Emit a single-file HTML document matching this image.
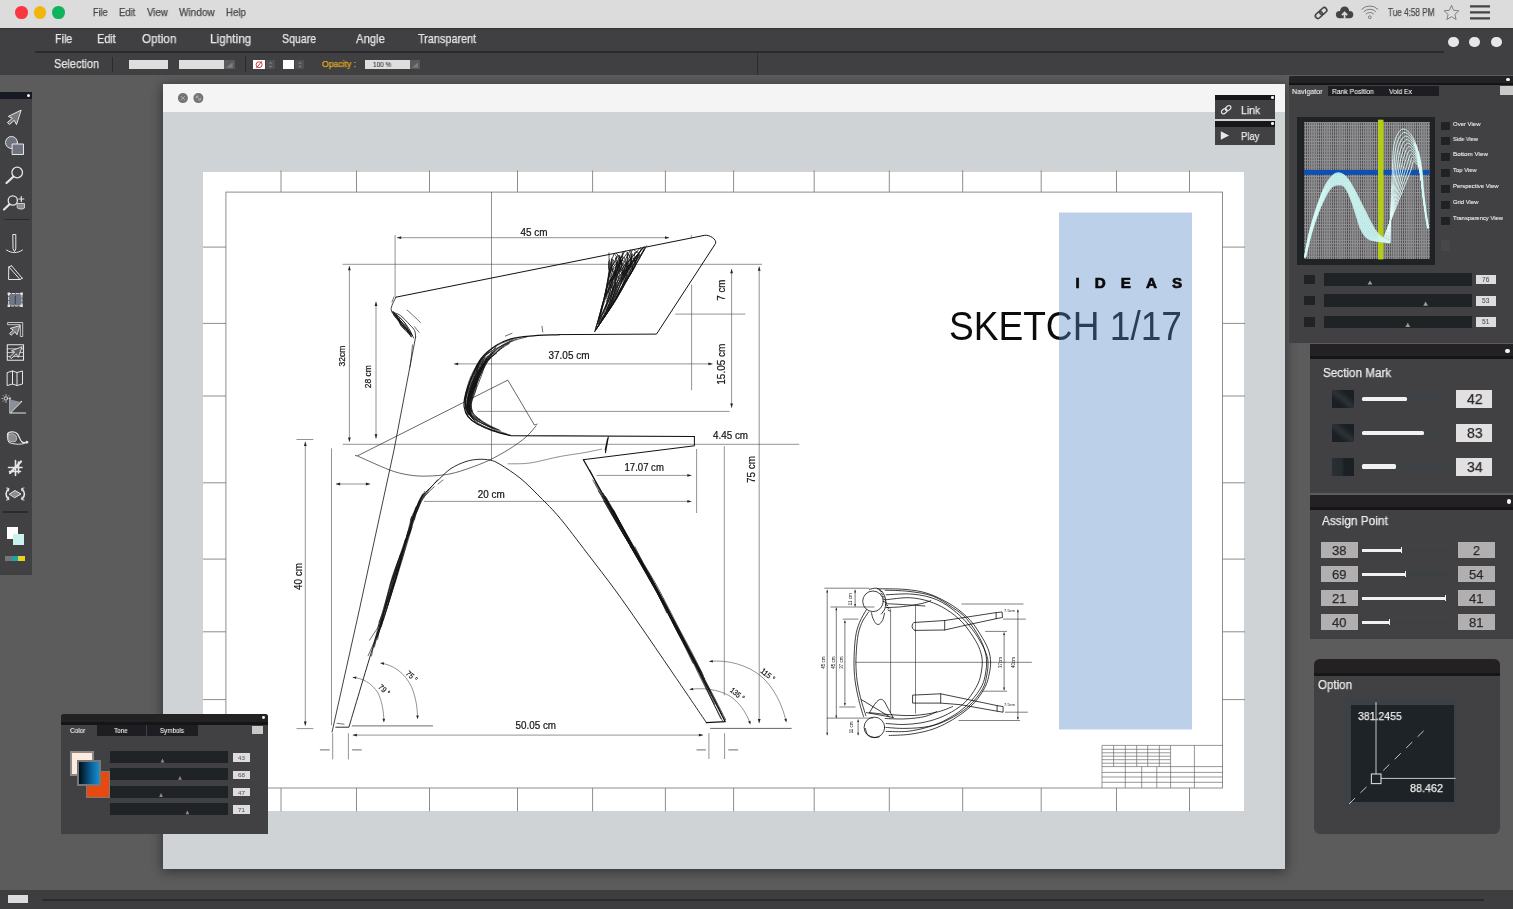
<!DOCTYPE html>
<html lang="en"><head><meta charset="utf-8"><title>Sketch 1/17</title>
<style>
html,body{margin:0;padding:0;}
body{width:1513px;height:909px;overflow:hidden;background:#5c5c5c;font-family:"Liberation Sans",sans-serif;}
#root{position:relative;width:1513px;height:909px;overflow:hidden;background:#5c5c5c;}
#root div{position:absolute;box-sizing:border-box;}
#root svg{position:absolute;left:0;top:0;overflow:visible;}
.t{position:absolute;white-space:nowrap;line-height:1;transform-origin:0 50%;display:block;will-change:transform;-webkit-text-stroke:0.25px currentColor;}
svg text{font-family:"Liberation Sans",sans-serif;}
</style></head>
<body><div id="root">
<div style="left:163.4px;top:84.0px;width:1122.0px;height:785.4px;background:#d0d3d6;box-shadow:0 2px 11px 1px rgba(0,0,0,.42);"></div>
<div style="left:163.4px;top:84.0px;width:1122.0px;height:28.0px;background:#f4f4f4;"></div>
<svg width="1513" height="120" viewBox="0 0 1513 120"><circle cx="182.900" cy="98.100" r="5" fill="#747474"/><circle cx="198.400" cy="98.100" r="5" fill="#747474"/><path d="M180.900 96.100l4 4M184.900 96.100l-4 4" stroke="#b4b4b4" stroke-width="0.9"/><path d="M196.400 96.100l4 4M196.400 98.400v-2.300h2.300M200.400 97.800v2.300h-2.300" stroke="#b4b4b4" stroke-width="0.9" fill="none"/></svg>
<div style="left:203.2px;top:172.4px;width:1040.4px;height:639.0px;background:#ffffff;"></div>
<div style="left:0.0px;top:0.0px;width:1513.0px;height:28.0px;background:#dcdcdc;"></div>
<div style="left:15.1px;top:6.0px;width:12.6px;height:12.6px;background:#fb3640;border-radius:50%;"></div>
<div style="left:33.6px;top:6.0px;width:12.6px;height:12.6px;background:#f2b50d;border-radius:50%;"></div>
<div style="left:52.0px;top:6.0px;width:12.6px;height:12.6px;background:#0fb35c;border-radius:50%;"></div>
<span class="t" style="left:93.4px;top:7.3px;font-size:10.6px;color:#474747;transform:scaleX(0.8548);">File</span>
<span class="t" style="left:119.4px;top:7.3px;font-size:10.6px;color:#474747;transform:scaleX(0.8978);">Edit</span>
<span class="t" style="left:146.7px;top:7.3px;font-size:10.6px;color:#474747;transform:scaleX(0.9173);">View</span>
<span class="t" style="left:178.5px;top:7.3px;font-size:10.6px;color:#474747;transform:scaleX(0.9469);">Window</span>
<span class="t" style="left:225.5px;top:7.3px;font-size:10.6px;color:#474747;transform:scaleX(0.9082);">Help</span>
<span class="t" style="left:1387.5px;top:7.5px;font-size:10.4px;color:#474747;transform:scaleX(0.7861);">Tue 4:58 PM</span>
<svg width="1513" height="28" viewBox="0 0 1513 28">
<g fill="none" stroke="#444" stroke-width="1.6" stroke-linecap="round">
 <g transform="translate(1321.100 13) rotate(-42)">
  <rect x="-6.800" y="-2.500" width="7.800" height="5" rx="2.500"/>
  <rect x="-1" y="-2.500" width="7.800" height="5" rx="2.500"/>
 </g>
</g>
<g fill="#444">
 <circle cx="1339.500" cy="14.600" r="3.600"/><circle cx="1344.600" cy="11" r="4.500"/><circle cx="1349.700" cy="14.600" r="3.600"/>
 <rect x="1339.500" y="13" width="10.200" height="5.200"/>
</g>
<path d="M1344.600 18.200v-5.400m-2.600 2.300l2.600-2.700 2.600 2.700" stroke="#dcdcdc" stroke-width="1.700" fill="none"/>
<g fill="none" stroke="#7a7a7a" stroke-width="1">
 <path d="M1361.600 9.400a11.600 11.600 0 0 1 16.400 0"/>
 <path d="M1363.700 11.800a8.600 8.600 0 0 1 12.200 0"/>
 <path d="M1365.800 14.200a5.600 5.600 0 0 1 8 0"/>
 <circle cx="1369.800" cy="17.200" r="1.400"/>
</g>
<path d="M1451.500 5.400l2.100 4.900 5.300.5-4 3.500 1.200 5.200-4.600-2.800-4.600 2.800 1.200-5.200-4-3.500 5.300-.5z" fill="none" stroke="#777" stroke-width="0.9"/>
<g stroke="#444" stroke-width="2.300">
 <path d="M1470 6.400h20M1470 12.400h20M1470 18.400h20"/>
</g>
</svg>
<div style="left:0.0px;top:28.0px;width:1513.0px;height:47.4px;background:#404042;"></div>
<div style="left:0.0px;top:28.0px;width:1513.0px;height:1.2px;background:#333335;"></div>
<div style="left:34.7px;top:50.6px;width:1409.5px;height:2.0px;background:#2a2a2c;border-radius:1px;"></div>
<span class="t" style="left:55.1px;top:33.3px;font-size:12.2px;color:#e6e6e6;transform:scaleX(0.8800);">File</span>
<span class="t" style="left:97.2px;top:33.3px;font-size:12.2px;color:#e6e6e6;transform:scaleX(0.8943);">Edit</span>
<span class="t" style="left:142.2px;top:33.3px;font-size:12.2px;color:#e6e6e6;transform:scaleX(0.9542);">Option</span>
<span class="t" style="left:209.6px;top:33.3px;font-size:12.2px;color:#e6e6e6;transform:scaleX(0.9640);">Lighting</span>
<span class="t" style="left:281.9px;top:33.3px;font-size:12.2px;color:#e6e6e6;transform:scaleX(0.8668);">Square</span>
<span class="t" style="left:356.2px;top:33.3px;font-size:12.2px;color:#e6e6e6;transform:scaleX(0.9229);">Angle</span>
<span class="t" style="left:417.7px;top:33.3px;font-size:12.2px;color:#e6e6e6;transform:scaleX(0.8924);">Transparent</span>
<div style="left:1448.0px;top:36.6px;width:10.8px;height:10.8px;background:#e9e6e8;border-radius:50%;"></div>
<div style="left:1469.4px;top:36.6px;width:10.8px;height:10.8px;background:#e9e6e8;border-radius:50%;"></div>
<div style="left:1490.8px;top:36.6px;width:10.8px;height:10.8px;background:#e9e6e8;border-radius:50%;"></div>
<span class="t" style="left:54.0px;top:58.1px;font-size:12.2px;color:#e6e6e6;transform:scaleX(0.9006);">Selection</span>
<div style="left:112.1px;top:56.5px;width:1.2px;height:15.0px;background:#2b2b2d;"></div>
<div style="left:128.5px;top:60.0px;width:39.5px;height:9.4px;background:#dedede;"></div>
<div style="left:178.5px;top:60.0px;width:45.5px;height:9.4px;background:#dedede;"></div>
<div style="left:224.0px;top:60.0px;width:11.0px;height:9.4px;background:#5a5a5c;"></div>
<svg width="1513" height="80" viewBox="0 0 1513 80"><path d="M226.500 67.500l6-5v5z" fill="#7d7d7f"/><path d="M412 67.500l6-5v5z" fill="#7d7d7f"/><circle cx="259.100" cy="64.700" r="3" fill="none" stroke="#c4303a" stroke-width="0.9"/><path d="M256.300 68.200l5.600-7" stroke="#c4303a" stroke-width="0.9"/><g fill="#77777a"><path d="M268.700 63.400h4l-2-2.300zM268.700 66h4l-2 2.300z"/><path d="M298 63.400h4l-2-2.300zM298 66h4l-2 2.300z"/></g></svg>
<div style="left:245.1px;top:55.8px;width:1.2px;height:16.0px;background:#2b2b2d;"></div>
<div style="left:253.3px;top:59.9px;width:11.6px;height:9.4px;background:#ffffff;"></div>
<div style="left:266.0px;top:59.9px;width:9.4px;height:9.4px;background:#505053;"></div>
<div style="left:282.8px;top:59.9px;width:11.2px;height:9.4px;background:#ffffff;"></div>
<div style="left:295.4px;top:59.9px;width:9.1px;height:9.4px;background:#505053;"></div>
<svg width="1513" height="80" viewBox="0 0 1513 80"><circle cx="259.100" cy="64.700" r="3" fill="none" stroke="#c4303a" stroke-width="0.9"/><path d="M256.300 68.200l5.600-7" stroke="#c4303a" stroke-width="0.9"/><g fill="#77777a"><path d="M268.700 63.700h4l-2-2.300zM268.700 65.700h4l-2 2.300z"/><path d="M298 63.700h4l-2-2.300zM298 65.700h4l-2 2.300z"/></g></svg>
<span class="t" style="left:321.6px;top:59.9px;font-size:8.9px;color:#e2a625;transform:scaleX(0.9739);">Opacity :</span>
<div style="left:364.5px;top:60.0px;width:45.1px;height:9.4px;background:#dedede;"></div>
<span class="t" style="left:373.2px;top:61.6px;font-size:6.6px;color:#3a3a3a;-webkit-text-stroke:0.1px currentColor;transform:scaleX(0.9725);">100 %</span>
<div style="left:409.6px;top:60.0px;width:10.9px;height:9.4px;background:#5a5a5c;"></div>
<svg width="1513" height="80" viewBox="0 0 1513 80"><path d="M226.500 67.500l6-5v5z" fill="#7d7d7f"/><path d="M412 67.500l6-5v5z" fill="#7d7d7f"/></svg>
<div style="left:756.5px;top:52.5px;width:1.5px;height:22.5px;background:#2b2b2d;"></div>
<div style="left:0.0px;top:890.0px;width:1513.0px;height:19.0px;background:#3e3e40;"></div>
<div style="left:7.6px;top:895.4px;width:20.4px;height:8.0px;background:#dcdcdc;"></div>
<div style="left:42.0px;top:898.8px;width:1441.7px;height:2.0px;background:#2a2a2c;border-radius:1px;"></div>
<svg width="1513" height="909" viewBox="0 0 1513 909">
<g fill="none" stroke="#808080" stroke-width="0.9">
<rect x="225.900" y="192.100" width="996.600" height="595.900"/>
<path d="M281 170.500V192M281 788V811.400M356.5 170.500V192M356.5 788V811.400M429.5 170.500V192M429.5 788V811.400M517.5 170.500V192M517.5 788V811.400M592.6 170.500V192M592.6 788V811.400M665.4 170.500V192M665.4 788V811.400M733.6 170.500V192M733.6 788V811.400M814.2 170.500V192M814.2 788V811.400M889.3 170.500V192M889.3 788V811.400M962.7 170.500V192M962.7 788V811.400M1041.2 170.500V192M1041.2 788V811.400M1116.5 170.500V192M1116.5 788V811.400M1189.5 170.500V192M1189.5 788V811.400M203 247.1H226M1222.500 247.1H1245M203 323.4H226M1222.500 323.4H1245M203 396H226M1222.500 396H1245M203 482.8H226M1222.500 482.8H1245M203 559.1H226M1222.500 559.1H1245M203 631.8H226M1222.500 631.8H1245M203 699.6H226M1222.500 699.6H1245"/>
</g>
<g fill="none" stroke="#6a6a6a" stroke-width="0.7">
<path d="M1102 745.400H1222.500M1102 745.400V788M1102 766.600H1222.500M1170.600 745.400V788M1194.400 745.400V788M1113.6 745.400V766.600M1125.3 745.400V766.600M1136.7 745.400V766.600M1147.7 745.400V766.600M1159.3 745.400V766.600M1102 749.3H1170.600M1102 752.8H1170.600M1102 756.2H1170.600M1102 759.7H1170.600M1102 763.2H1170.600M1102 772.4H1222.500M1102 777H1222.500M1102 782.3H1222.500M1125.3 766.600V788M1141.7 766.600V788M1156.8 766.600V788"/></g>
<text x="948.9" y="339.8" font-size="40.3" fill="#0c0c0c" textLength="233.1" lengthAdjust="spacingAndGlyphs">SKETCH 1/17</text>
<rect x="1059" y="212.500" width="133" height="517" fill="rgb(90,137,202)" fill-opacity="0.4"/>
<text x="1075.600" y="288.300" font-size="15.2" font-weight="700" fill="#0a0a0a" stroke="#0a0a0a" stroke-width="0.7" letter-spacing="15">IDEAS</text>
<g fill="none" stroke="#4a4a4a" stroke-width="0.6">
<path d="M491.500 192V460.200M395.100 235V296.600M342.600 264.300H762M342.600 444.300H799.200M477.300 411.400H729.500M691.600 284.600V390.200M675.200 314.100H745.300M696.600 449V513M724.300 446.200V695.400M331.500 448.400V725.400M296.500 439.500H313.400M296.500 728.600H313.400M332.700 733.200V759.400M348.400 733.200V759.400M708.900 733.200V759M724.600 733.200V759M423.900 501.400H691.500M691.300 235.200V238.500"/>
<path d="M397.0 237.7H669.2"/><path d="M397.0 237.7L401.2 236.3L401.2 239.1z" fill="#222" stroke="none"/><path d="M669.2 237.7L665.0 239.1L665.0 236.3z" fill="#222" stroke="none"/>
<path d="M454.0 363.9H712.6"/><path d="M454.0 363.9L458.2 362.5L458.2 365.3z" fill="#222" stroke="none"/><path d="M712.6 363.9L708.4 365.3L708.4 362.5z" fill="#222" stroke="none"/>
<path d="M596.5 475.4H691.5"/><path d="M691.5 475.4L687.3 476.8L687.3 474.0z" fill="#222" stroke="none"/>
<path d="M691.5 501.4L687.3 502.8L687.3 500.0z" fill="#222" stroke="none"/>
<path d="M352.7 735.1H703.1"/><path d="M352.7 735.1L356.9 733.7L356.9 736.5z" fill="#222" stroke="none"/><path d="M703.1 735.1L698.9 736.5L698.9 733.7z" fill="#222" stroke="none"/>
<path d="M335.9 484.0H370.1"/><path d="M335.9 484.0L340.1 482.6L340.1 485.4z" fill="#222" stroke="none"/><path d="M370.1 484.0L365.9 485.4L365.9 482.6z" fill="#222" stroke="none"/>
<path d="M349.4 266.0V441.8"/><path d="M349.4 266.0L350.8 270.2L348.0 270.2z" fill="#222" stroke="none"/><path d="M349.4 441.8L348.0 437.6L350.8 437.6z" fill="#222" stroke="none"/>
<path d="M376.0 301.8V438.5"/><path d="M376.0 301.8L377.4 306.0L374.6 306.0z" fill="#222" stroke="none"/><path d="M376.0 438.5L374.6 434.3L377.4 434.3z" fill="#222" stroke="none"/>
<path d="M305.3 441.8V725.7"/><path d="M305.3 441.8L306.7 446.0L303.9 446.0z" fill="#222" stroke="none"/><path d="M305.3 725.7L303.9 721.5L306.7 721.5z" fill="#222" stroke="none"/>
<path d="M731.6 269.0V407.7"/><path d="M731.6 269.0L733.0 273.2L730.2 273.2z" fill="#222" stroke="none"/><path d="M731.6 407.7L730.2 403.5L733.0 403.5z" fill="#222" stroke="none"/>
<path d="M759.2 266.5V723.1"/><path d="M759.2 266.5L760.6 270.7L757.8 270.7z" fill="#222" stroke="none"/><path d="M759.2 723.1L757.8 718.9L760.6 718.9z" fill="#222" stroke="none"/>
<path d="M380.400 663.100C392 664.500 405 672 412 688C416 698 417.300 708 417.600 718"/><path d="M380.4 663.1L384.1 662.3L383.8 664.9z" fill="#222" stroke="none"/><path d="M417.6 719.2L416.2 715.6L418.8 715.6z" fill="#222" stroke="none"/>
<path d="M352.700 677.300C362 678 372 683 378 693C382 701 383.600 711 383.900 721"/><path d="M352.7 677.3L356.4 676.4L356.1 679.0z" fill="#222" stroke="none"/><path d="M383.9 722.4L382.5 718.8L385.1 718.8z" fill="#222" stroke="none"/>
<path d="M709.200 661.400C728 659.500 748 665 762 677C774 688 782 704 786 721"/><path d="M709.2 661.4L712.7 659.9L712.9 662.4z" fill="#222" stroke="none"/><path d="M786.4 722.4L784.3 719.2L786.8 718.6z" fill="#222" stroke="none"/>
<path d="M689.600 689.400C703 687.500 718 689.500 729 695.500C739 702 746 712 750 723"/><path d="M689.6 689.4L693.0 687.7L693.3 690.3z" fill="#222" stroke="none"/><path d="M750.5 724.6L748.0 721.7L750.5 720.8z" fill="#222" stroke="none"/>
</g>
<g fill="none" stroke="#8a8a8a" stroke-width="1.1">
<path d="M351.800 725.900H433.100M319.900 749.900H329.700M352.100 749.900H361.700M696.500 749.900H705.900M728.300 749.900H738.200"/>
<path d="M710.200 728.400H791.600" stroke="#555" stroke-width="0.9"/>
</g>
<g fill="none" stroke="#161616" stroke-width="0.65">
<path d="M355 455.500L357.400 455.900L507.800 380.100L534.400 425L537.500 424"/>
<path d="M357.4 455.9C360.5 457.3 369.9 461.6 376.1 464.3C382.4 467.0 388.6 469.9 394.9 471.8C401.1 473.7 407.4 474.9 413.6 475.6C419.8 476.3 426.1 476.2 432.3 475.9C438.5 475.6 444.8 475.0 451.0 473.7C457.2 472.4 463.5 470.2 469.7 468.0C475.9 465.8 481.8 463.7 488.4 460.6C494.9 457.5 502.7 453.2 509.0 449.3C515.3 445.4 521.5 440.9 526.0 437.0C530.5 433.1 534.6 427.5 536.3 425.6"/>
<path d="M507.7 463.8C511.4 463.7 521.3 464.2 530.0 463.0C538.7 461.8 550.8 458.2 560.0 456.5C569.2 454.8 578.0 453.8 585.0 452.5C592.0 451.2 599.2 449.6 602.1 449.0" stroke="#555"/>
</g>
<g fill="none" stroke="#111" stroke-width="1" stroke-linejoin="round" stroke-linecap="round">
<path d="M395.900 297.200L704.700 235.300C709 234.600 717 239 715.600 243.400L656.500 334.100L559.600 334.600"/>
<path d="M559.6 334.6C554.6 334.9 537.8 335.4 529.7 336.1C521.6 336.8 516.6 337.3 511.0 338.9C505.4 340.5 501.0 342.2 496.0 345.5C491.0 348.8 485.1 353.3 481.0 358.6C476.9 363.9 474.3 371.1 471.7 377.3C469.1 383.5 466.4 391.0 465.1 396.0C463.9 401.0 463.7 403.8 464.2 407.2C464.7 410.6 465.8 413.8 468.0 416.6C470.2 419.4 473.2 421.8 477.3 424.1C481.4 426.4 486.7 428.7 492.3 430.6C497.9 432.5 507.9 434.9 511.0 435.7L694.400 436.500" stroke-width="1.200"/>
<path d="M694.400 436.500V445.800L583.400 459.700"/>
<path d="M583.4 459.7C589.5 470.5 607.7 502.8 620.0 524.5C632.3 546.2 645.6 568.7 657.3 590.1C669.0 611.5 678.7 631.1 690.0 653.0C701.3 674.9 719.3 710.2 725.2 721.6L706.400 722.600" stroke-width="1.300"/>
<path d="M335.800 727.200L348.9 727.2C352.2 716.0 363.1 679.5 369.0 660.0C374.9 640.5 380.3 624.2 384.6 610.0C388.9 595.8 391.6 585.6 394.9 574.7C398.2 563.8 401.1 554.8 404.2 544.8C407.3 534.8 410.8 522.7 413.6 514.9C416.4 507.1 418.3 502.5 421.0 498.0C423.7 493.5 426.9 491.2 430.0 488.0C433.1 484.8 436.3 481.8 439.8 478.5C443.3 475.2 446.6 471.3 451.0 468.5C455.4 465.7 461.3 463.0 466.0 461.5C470.7 460.0 474.9 459.5 479.0 459.3C483.1 459.1 486.8 459.4 490.3 460.2C493.8 461.0 495.1 461.3 500.0 464.3C504.9 467.3 513.3 472.6 520.0 478.0C526.7 483.4 533.3 490.3 540.0 497.0C546.7 503.7 552.2 508.9 560.0 518.2C567.8 527.5 577.8 541.0 587.0 553.0C596.2 565.0 606.4 578.1 615.2 590.1C624.0 602.1 630.5 611.6 640.0 625.3C649.5 638.9 660.9 655.8 672.0 672.0C683.1 688.2 700.7 714.2 706.4 722.6" stroke-width="0.9"/>
<path d="M337 723.300L344 724.200" stroke-width="0.6"/>
<path d="M395.9 297.2C395.1 299.3 390.4 306.8 391.2 309.9C392.0 313.0 397.5 313.1 400.6 315.6C403.7 318.1 407.6 322.4 409.9 324.9C412.2 327.4 413.7 328.5 414.6 330.5C415.6 332.5 415.4 335.9 415.6 337.0" stroke-width="0.8"/>
<path d="M415.600 337L394 450L359.300 610L332.100 731.900" stroke-width="0.8"/>
</g>
<g fill="none" stroke="#111" stroke-width="0.7" stroke-linecap="round">
<path d="M394.3 315.7C395.0 316.3 397.1 318.2 398.5 319.6C400.0 320.9 401.4 322.4 402.7 323.9C404.1 325.4 405.3 327.0 406.5 328.6C407.6 330.2 409.2 332.7 409.7 333.6M393.1 311.4C393.8 312.4 396.0 315.6 397.3 317.9C398.5 320.1 399.4 322.7 400.7 324.8C402.1 327.0 403.7 328.8 405.5 330.6C407.2 332.5 410.1 335.0 411.0 335.9M393.1 312.4C394.1 313.3 397.5 315.7 399.5 317.6C401.6 319.4 403.6 321.4 405.3 323.6C407.0 325.7 408.6 328.0 410.0 330.4C411.3 332.8 413.0 336.6 413.6 337.9M395.7 315.2C396.1 316.0 397.4 318.5 398.4 320.1C399.4 321.7 400.5 323.2 401.6 324.7C402.8 326.1 404.0 327.5 405.3 328.8C406.6 330.2 408.7 332.1 409.4 332.8M394.5 313.2C395.5 314.0 398.4 316.2 400.2 317.9C401.9 319.6 403.8 321.3 405.1 323.3C406.5 325.3 407.1 327.9 408.1 330.1C409.2 332.3 410.8 335.5 411.3 336.6M391.6 311.6C392.6 312.5 395.5 315.3 397.3 317.3C399.1 319.2 400.8 321.4 402.3 323.5C403.9 325.7 405.2 328.1 406.7 330.3C408.2 332.6 410.5 335.8 411.2 336.9M392.1 312.4C392.8 313.4 394.9 316.5 396.4 318.5C397.9 320.4 399.6 322.4 401.3 324.2C403.0 326.0 404.8 327.7 406.6 329.5C408.4 331.2 411.3 334.0 412.2 334.9M396.5 314.8C397.0 315.7 398.4 318.6 399.3 320.4C400.3 322.2 401.0 324.0 402.3 325.6C403.5 327.1 405.3 328.4 406.8 329.8C408.3 331.1 410.8 333.2 411.6 333.8M399.2 318.1C399.3 319.0 399.4 321.6 399.8 323.0C400.2 324.4 400.7 325.4 401.6 326.3C402.5 327.3 404.0 328.0 405.2 328.8C406.5 329.5 408.5 330.6 409.2 330.9M393.1 313.2C394.0 314.1 396.7 316.5 398.4 318.3C400.1 320.0 401.8 321.8 403.5 323.7C405.2 325.5 406.9 327.4 408.3 329.4C409.8 331.4 411.5 334.7 412.1 335.8M393.7 315.1C394.4 315.8 396.7 317.9 398.3 319.3C399.8 320.8 401.5 322.2 402.9 323.9C404.3 325.5 405.4 327.5 406.6 329.3C407.8 331.0 409.6 333.7 410.2 334.6" stroke-width="0.8"/>
<path d="M407.100 310C411 313.500 416 318 420.500 322.600M414.600 326.800C416 329 418 331 419.300 332.400M394 296.800L392 302M412.500 345C412 352 411 360 410 367" stroke-width="0.6"/>
<path d="M512.8 339.3C510.5 340.2 503.2 342.2 498.9 344.5C494.6 346.8 490.5 349.9 487.0 353.2C483.4 356.6 480.2 360.5 477.6 364.6C475.0 368.8 473.1 373.6 471.3 378.2C469.5 382.8 467.9 387.7 466.9 392.5C465.9 397.2 464.3 402.6 465.3 406.8C466.3 411.1 469.7 414.8 473.0 417.8C476.3 420.8 481.0 422.7 485.3 424.7C489.7 426.7 496.7 429.0 499.0 429.9M484.8 363.3C484.4 364.3 483.5 367.5 482.6 369.8C481.8 372.0 480.7 374.3 479.8 376.5C478.9 378.7 478.0 380.7 477.2 382.9C476.4 385.0 475.6 387.4 474.8 389.6C474.0 391.7 473.0 393.7 472.2 395.8C471.4 397.8 470.6 400.0 470.1 401.9C469.6 403.9 469.2 405.6 469.2 407.6C469.3 409.6 469.5 411.9 470.3 413.9C471.1 415.9 473.3 418.4 473.9 419.3M501.9 347.9C500.2 349.2 495.0 353.2 492.0 356.1C489.0 359.0 486.2 361.7 483.8 365.3C481.4 368.9 479.4 373.6 477.5 377.8C475.6 382.1 473.9 386.6 472.5 390.9C471.1 395.1 469.3 399.3 469.1 403.2C468.9 407.1 469.2 411.1 471.2 414.3C473.2 417.5 477.3 420.1 481.0 422.6C484.8 425.0 489.2 427.2 493.6 429.1C497.9 431.0 504.9 433.2 507.1 434.1M477.3 365.5C477.3 366.6 477.3 370.0 477.3 372.1C477.2 374.3 477.2 376.5 477.1 378.4C477.0 380.4 476.7 382.2 476.5 384.1C476.3 386.0 476.3 388.3 475.9 390.1C475.5 392.0 474.7 393.7 474.1 395.3C473.5 396.9 473.0 398.2 472.4 399.7C471.9 401.1 471.1 402.6 470.7 404.1C470.2 405.7 470.0 407.4 469.8 409.1C469.6 410.8 469.6 413.7 469.5 414.6M484.9 361.3C484.5 361.9 483.4 363.7 482.6 365.0C481.7 366.4 480.6 367.8 479.7 369.2C478.7 370.6 477.7 372.1 476.8 373.6C475.9 375.0 475.0 376.4 474.2 377.9C473.4 379.4 472.7 380.9 471.9 382.5C471.2 384.0 470.6 385.6 469.9 387.2C469.1 388.8 468.3 390.3 467.6 391.9C466.9 393.5 466.0 394.9 465.6 396.6C465.2 398.2 465.2 400.8 465.1 401.7M489.4 351.7C488.7 352.3 486.5 354.3 485.2 355.6C483.9 357.0 482.5 358.2 481.5 359.7C480.4 361.2 479.8 363.0 479.0 364.8C478.3 366.5 477.9 368.5 477.2 370.3C476.5 372.0 475.5 373.7 474.8 375.4C474.2 377.2 474.0 379.2 473.5 381.0C473.0 382.8 472.4 384.6 472.0 386.5C471.5 388.3 471.2 390.4 470.8 392.1C470.5 393.9 470.1 396.3 470.0 397.1M487.9 356.1C486.8 357.0 483.1 359.3 481.2 361.5C479.3 363.6 477.9 366.4 476.3 369.0C474.8 371.7 473.3 374.3 472.1 377.1C470.8 379.9 470.0 382.8 468.9 385.6C467.9 388.5 466.4 391.3 465.9 394.2C465.3 397.2 465.2 400.4 465.5 403.2C465.9 406.0 466.8 408.9 468.1 411.2C469.4 413.5 471.1 415.2 473.2 416.8C475.2 418.4 479.3 420.2 480.6 420.8M490.2 355.3C488.9 356.6 484.9 359.9 482.7 362.8C480.5 365.6 478.8 369.2 477.0 372.6C475.2 375.9 473.6 379.3 472.0 382.8C470.4 386.3 468.8 389.9 467.6 393.5C466.5 397.2 465.2 400.9 465.3 404.5C465.3 408.1 466.0 412.3 467.9 415.4C469.7 418.5 473.1 421.0 476.3 423.1C479.4 425.3 483.2 426.7 486.8 428.2C490.3 429.6 495.9 431.4 497.7 432.1M511.4 341.0C509.3 342.1 502.6 345.0 498.8 347.8C495.0 350.6 491.4 354.4 488.6 357.8C485.8 361.3 484.1 364.8 482.0 368.8C479.9 372.8 477.9 377.4 476.1 381.9C474.3 386.4 472.3 391.2 471.4 395.5C470.4 399.8 469.6 404.0 470.4 407.5C471.1 411.0 473.2 413.7 476.0 416.5C478.8 419.2 483.2 421.8 487.2 424.1C491.3 426.5 498.1 429.5 500.2 430.6M526.9 336.9C524.9 337.5 518.6 338.8 514.8 340.2C511.0 341.6 507.3 343.4 504.0 345.4C500.7 347.5 497.9 349.8 495.0 352.3C492.0 354.8 488.6 357.5 486.3 360.5C484.0 363.5 483.0 366.9 481.2 370.4C479.5 373.8 477.5 377.5 475.8 381.2C474.1 384.9 472.3 388.8 470.8 392.5C469.4 396.2 467.5 399.7 467.1 403.4C466.7 407.1 468.2 412.8 468.4 414.7M490.4 351.8C489.3 352.6 485.6 354.9 483.7 356.9C481.7 358.8 480.3 361.1 478.8 363.5C477.4 365.8 476.2 368.4 474.9 370.9C473.6 373.4 472.2 375.9 471.0 378.4C469.9 381.0 469.1 383.7 468.2 386.4C467.4 389.1 466.5 391.8 466.0 394.5C465.5 397.3 465.2 400.1 465.3 402.8C465.5 405.4 466.0 408.1 466.9 410.4C467.9 412.8 470.4 415.7 471.0 416.8M496.0 346.8C495.0 348.1 491.9 351.9 489.9 354.3C487.9 356.6 485.4 358.3 483.8 360.8C482.2 363.3 481.7 366.3 480.5 369.1C479.4 372.0 478.2 375.0 477.0 377.9C475.9 380.8 474.8 383.5 473.7 386.4C472.5 389.3 471.0 392.2 470.0 395.0C469.1 397.9 468.1 400.6 467.9 403.3C467.6 406.0 467.7 408.7 468.5 411.4C469.3 414.0 471.9 417.8 472.6 419.0M478.5 363.7C478.3 364.6 477.6 367.3 477.2 369.1C476.7 370.9 476.2 372.7 475.8 374.5C475.3 376.2 474.9 378.0 474.5 379.7C474.1 381.4 473.7 383.1 473.3 384.8C472.9 386.5 472.5 388.4 472.0 390.1C471.4 391.8 470.4 393.3 469.9 394.9C469.3 396.4 468.9 397.9 468.5 399.5C468.1 401.1 467.6 402.9 467.5 404.4C467.3 406.0 467.4 408.3 467.4 409.0M481.7 358.6C480.9 360.0 478.4 364.1 476.8 367.0C475.3 369.8 473.7 372.7 472.4 375.7C471.1 378.7 470.0 381.8 469.0 384.9C468.0 387.9 466.8 391.1 466.2 394.2C465.7 397.4 465.4 400.7 465.7 403.7C465.9 406.8 466.4 409.9 467.8 412.4C469.2 414.9 471.7 416.7 474.1 418.5C476.4 420.3 479.1 422.0 481.8 423.4C484.6 424.7 489.3 426.3 490.7 426.9M508.6 344.1C507.2 344.9 502.8 347.1 500.5 348.9C498.1 350.6 496.5 352.7 494.4 354.7C492.3 356.7 489.7 358.8 488.0 360.9C486.3 363.1 485.6 365.2 484.2 367.7C482.8 370.2 481.0 373.4 479.6 376.2C478.3 379.0 477.4 381.6 476.2 384.5C474.9 387.3 473.3 390.5 472.2 393.3C471.0 396.0 469.9 398.5 469.3 401.1C468.7 403.8 468.9 407.9 468.8 409.3M486.8 357.9C486.0 358.7 483.2 360.8 481.7 362.7C480.1 364.6 478.9 366.9 477.5 369.0C476.2 371.2 474.7 373.4 473.6 375.7C472.4 378.1 471.7 380.5 470.8 382.9C469.8 385.3 468.7 387.7 467.9 390.2C467.0 392.6 466.1 395.0 465.8 397.5C465.4 400.0 465.4 402.7 465.8 405.0C466.2 407.4 467.0 409.7 468.2 411.6C469.3 413.6 471.9 415.9 472.7 416.7M495.8 348.5C494.8 349.9 491.6 354.3 489.8 356.9C488.0 359.5 486.4 361.5 485.1 364.3C483.9 367.1 483.3 370.6 482.2 373.6C481.1 376.7 479.9 379.5 478.7 382.6C477.4 385.6 476.0 389.0 474.9 391.9C473.7 394.8 472.5 397.4 471.7 400.1C470.8 402.8 469.6 405.4 469.6 408.1C469.5 410.9 470.2 413.8 471.6 416.6C473.0 419.3 476.8 423.4 477.9 424.8M480.5 368.2C480.1 369.6 478.5 373.9 477.7 376.8C476.9 379.6 476.4 382.4 475.6 385.2C474.9 388.1 473.8 391.4 473.2 394.1C472.5 396.7 472.1 398.9 471.8 401.2C471.5 403.5 471.2 405.7 471.5 407.9C471.8 410.0 472.4 412.2 473.6 414.1C474.9 416.0 476.9 417.5 478.9 419.2C481.0 420.9 483.4 422.6 485.9 424.2C488.4 425.8 492.4 428.0 493.7 428.7M516.5 338.9C514.3 339.9 507.2 342.3 503.0 344.7C498.9 347.1 495.1 350.2 491.8 353.4C488.6 356.6 485.9 359.9 483.5 363.9C481.2 368.0 479.3 372.9 477.6 377.4C475.8 382.0 474.2 386.8 472.9 391.3C471.7 395.7 470.1 400.3 470.1 404.1C470.1 408.0 470.6 411.3 472.8 414.4C475.0 417.5 479.3 420.2 483.2 422.7C487.2 425.2 494.2 428.4 496.4 429.5M503.8 346.7C502.5 347.7 498.8 350.3 496.3 352.5C493.7 354.7 490.6 357.6 488.6 360.1C486.5 362.6 485.6 364.7 484.0 367.5C482.4 370.4 480.5 374.1 479.1 377.3C477.6 380.6 476.6 383.7 475.2 386.9C473.8 390.1 471.8 393.3 470.7 396.5C469.6 399.6 468.7 402.9 468.7 405.9C468.6 408.9 469.0 411.9 470.5 414.5C472.0 417.2 476.5 420.6 477.7 421.8M509.5 343.3C508.2 343.7 504.0 345.1 501.4 346.2C498.8 347.2 496.4 348.1 493.9 349.5C491.5 351.0 489.1 352.9 486.8 354.6C484.5 356.4 482.1 358.1 480.2 360.2C478.3 362.4 476.8 365.1 475.4 367.7C473.9 370.2 472.6 372.8 471.3 375.5C470.1 378.2 469.0 381.0 468.2 383.8C467.3 386.6 466.5 389.6 466.0 392.4C465.5 395.3 465.3 399.7 465.1 401.1M490.3 357.6C489.2 358.9 485.6 362.6 483.4 365.8C481.1 368.9 478.9 372.9 476.9 376.6C475.0 380.3 473.1 384.2 471.5 388.0C469.9 391.8 468.0 395.7 467.4 399.5C466.7 403.4 466.4 407.7 467.6 411.2C468.8 414.7 471.7 417.9 474.7 420.5C477.7 423.2 481.7 425.1 485.5 427.0C489.3 428.8 493.4 430.3 497.4 431.7C501.5 433.1 507.8 434.7 509.8 435.3"/>
<path d="M486.7 358.5C486.0 359.8 483.7 363.3 482.3 366.3C480.9 369.2 479.4 372.9 478.2 376.1C477.0 379.4 476.1 382.3 475.0 385.6C474.0 388.9 472.8 392.7 472.1 395.8C471.4 399.0 470.9 401.9 470.9 404.7C470.9 407.4 472.1 410.8 472.3 412.1M489.5 357.9C488.6 358.8 485.5 361.0 483.8 363.4C482.1 365.7 480.9 369.4 479.4 372.2C477.9 375.1 476.2 377.7 474.9 380.6C473.5 383.5 472.4 386.8 471.4 389.7C470.4 392.7 469.5 395.5 469.0 398.4C468.5 401.3 468.4 405.6 468.3 407.1M485.6 362.8C484.9 364.2 482.8 368.4 481.3 371.3C479.9 374.2 478.4 377.2 477.1 380.2C475.8 383.2 474.8 386.6 473.6 389.5C472.5 392.5 471.1 395.2 470.3 398.0C469.6 400.9 469.0 404.1 469.1 406.8C469.3 409.5 471.1 413.1 471.5 414.4M483.9 357.3C483.0 358.7 480.3 362.8 478.7 365.8C477.1 368.8 475.6 372.1 474.3 375.3C473.0 378.5 472.0 381.8 471.1 385.1C470.2 388.4 469.1 391.9 468.7 395.1C468.2 398.4 467.8 401.9 468.3 404.7C468.8 407.5 471.2 410.8 471.8 412.0M483.3 360.1C482.9 361.3 481.5 365.2 480.5 367.8C479.5 370.5 478.2 373.3 477.2 376.0C476.2 378.6 475.5 381.1 474.5 383.8C473.5 386.4 472.3 389.4 471.3 391.9C470.3 394.5 469.2 396.6 468.5 399.2C467.8 401.7 467.2 405.9 467.0 407.2M493.0 352.0C491.9 353.3 488.0 357.0 486.2 359.5C484.4 362.0 483.7 364.2 482.2 366.9C480.8 369.7 479.0 373.0 477.7 375.9C476.3 378.9 475.3 381.7 474.0 384.8C472.8 387.8 471.1 391.1 470.0 394.1C468.9 397.1 467.9 401.4 467.5 402.9M480.6 367.0C479.7 368.6 476.9 373.3 475.3 376.5C473.7 379.8 472.5 383.1 471.2 386.4C470.0 389.7 468.3 393.2 467.7 396.5C467.1 399.8 466.9 403.3 467.5 406.2C468.2 409.2 469.4 411.9 471.5 414.1C473.6 416.4 478.7 418.7 480.1 419.6M485.1 356.5C484.3 358.0 481.8 362.1 480.3 365.3C478.9 368.4 477.9 372.1 476.6 375.4C475.4 378.6 474.1 381.6 472.8 384.9C471.5 388.1 469.8 391.5 468.9 394.8C467.9 398.1 467.3 401.3 467.1 404.5C466.9 407.7 467.7 412.5 467.9 414.1M496.7 353.1C495.0 354.4 489.1 357.8 486.4 360.5C483.7 363.2 482.6 366.2 480.7 369.6C478.7 372.9 476.6 376.7 474.8 380.4C473.1 384.2 471.4 388.3 470.3 392.1C469.1 396.0 468.0 400.0 468.0 403.6C468.0 407.2 470.1 412.0 470.5 413.7M486.1 361.4C485.2 362.5 482.5 365.5 480.8 368.0C479.1 370.5 477.2 373.6 475.7 376.5C474.2 379.4 473.1 382.3 471.9 385.3C470.7 388.4 469.2 391.6 468.6 394.7C468.0 397.8 467.9 401.1 468.3 403.9C468.8 406.6 470.7 409.9 471.2 411.1"/>
<path d="M505.400 336L512 333.300M542 326.200L542.800 332" stroke-width="0.6"/>
<path d="M644.2 246.7C641.7 250.1 632.6 260.6 629.1 267.2C625.5 273.7 626.2 279.1 622.9 285.9C619.7 292.7 614.5 300.7 609.8 308.2C605.2 315.7 597.5 327.2 595.1 331.0M645.3 248.0C644.1 250.2 640.4 256.7 637.7 261.3C635.1 265.8 632.3 270.4 629.6 275.3C626.8 280.1 624.3 285.1 621.3 290.3C618.3 295.5 613.2 303.6 611.6 306.3M630.6 249.9C629.1 252.6 624.8 260.6 621.8 266.6C618.7 272.5 614.8 279.2 612.3 285.3C609.8 291.5 608.7 297.8 606.5 303.5C604.3 309.2 600.3 316.9 599.1 319.6M620.4 257.1C620.2 259.1 620.0 265.1 619.0 269.5C618.0 273.8 615.8 278.8 614.6 283.2C613.4 287.6 613.2 291.6 611.8 296.0C610.5 300.4 607.3 307.2 606.4 309.4M637.8 255.4C635.9 258.0 629.0 266.2 626.5 271.2C623.9 276.2 624.4 280.4 622.7 285.1C620.9 289.9 619.1 294.2 616.1 299.6C613.0 305.0 606.1 314.5 604.1 317.5M623.0 252.8C622.6 255.4 621.7 263.2 620.6 268.6C619.5 274.0 618.1 279.6 616.5 285.1C614.9 290.6 613.7 296.1 611.2 301.7C608.7 307.3 603.0 316.0 601.4 318.9M622.4 259.5C620.9 262.7 616.6 271.8 613.5 278.7C610.4 285.5 606.1 294.2 603.7 300.8C601.3 307.3 600.2 313.2 598.8 317.9C597.5 322.6 596.0 327.2 595.5 329.1M625.1 250.8C623.6 253.6 617.8 262.1 616.1 267.4C614.4 272.6 615.9 277.0 614.7 282.3C613.6 287.6 611.0 293.9 609.2 299.1C607.3 304.3 604.7 311.2 603.8 313.6M619.6 255.5C619.8 257.1 620.6 261.9 621.0 265.0C621.5 268.0 623.5 270.1 622.3 273.8C621.1 277.5 616.4 282.7 613.7 287.3C611.1 291.8 607.6 298.9 606.4 301.2M632.4 253.9C631.3 256.6 628.3 264.1 625.6 269.9C622.9 275.7 618.6 282.7 616.1 288.4C613.6 294.2 613.3 299.0 610.7 304.5C608.1 310.0 602.3 318.6 600.6 321.4M630.9 257.4C630.7 258.9 630.3 263.5 630.1 266.4C629.9 269.3 630.8 271.4 629.6 274.6C628.4 277.9 625.2 282.1 622.9 286.0C620.6 289.9 617.1 295.9 616.0 297.8M608.8 261.9C608.9 263.3 609.4 267.2 609.4 270.0C609.4 272.7 609.0 275.6 608.9 278.3C608.9 281.1 609.8 283.3 609.1 286.4C608.4 289.5 605.4 295.0 604.7 296.8M640.5 247.6C638.7 249.6 632.5 255.9 629.6 259.9C626.7 263.9 624.8 267.9 623.3 271.7C621.8 275.5 621.8 279.0 620.7 282.7C619.6 286.4 617.3 292.1 616.6 294.0M623.1 251.6C622.3 253.8 620.3 260.3 618.5 265.0C616.7 269.7 613.5 275.0 612.0 279.7C610.5 284.5 610.6 288.8 609.5 293.5C608.3 298.2 605.9 305.5 605.2 307.9M638.2 255.2C637.3 257.6 635.6 264.4 632.8 270.0C629.9 275.6 624.9 282.6 621.0 289.0C617.1 295.4 613.2 302.2 609.2 308.6C605.3 315.0 599.3 324.3 597.3 327.4M637.8 254.9C636.8 256.5 633.6 261.3 631.6 264.6C629.6 267.9 627.8 271.1 625.8 274.6C623.9 278.2 621.8 282.0 619.8 285.8C617.8 289.5 614.9 295.2 613.9 297.1M616.3 257.0C616.6 259.6 618.6 267.1 618.0 272.7C617.4 278.3 615.1 284.3 612.7 290.7C610.3 297.1 606.0 305.7 603.6 311.2C601.2 316.8 599.3 321.8 598.4 323.9M641.1 249.2C640.5 250.5 638.7 254.5 637.6 257.2C636.5 259.8 635.3 262.4 634.2 265.0C633.2 267.6 632.6 269.9 631.2 272.7C629.9 275.5 626.9 280.3 626.1 281.9M643.7 246.9C641.6 249.5 634.8 257.2 630.8 262.6C626.9 268.1 622.7 274.2 620.1 279.6C617.5 285.0 616.8 290.1 615.0 295.1C613.1 300.0 609.9 306.8 608.9 309.2M615.5 257.9C615.6 259.4 616.9 263.5 616.3 266.8C615.8 270.0 613.7 273.6 612.1 277.3C610.5 281.1 607.8 285.7 606.8 289.2C605.8 292.7 606.3 297.0 606.2 298.6M624.0 257.1C624.5 258.7 626.9 263.3 626.9 266.8C626.9 270.2 625.4 273.8 623.9 277.7C622.4 281.7 619.8 286.3 617.9 290.5C615.9 294.8 613.1 301.0 612.1 303.1M632.1 254.7C631.6 257.3 631.0 264.7 629.2 270.3C627.4 275.8 624.3 282.1 621.3 288.0C618.4 294.0 615.7 299.6 611.7 306.1C607.8 312.6 600.0 323.6 597.7 327.1M638.6 254.7C637.2 257.4 633.1 265.4 630.4 271.1C627.7 276.8 625.6 282.5 622.2 288.7C618.8 294.9 614.6 301.6 610.2 308.3C605.9 315.1 598.5 325.9 596.2 329.4M632.4 249.8C631.2 252.6 627.9 260.8 625.0 266.9C622.1 273.0 618.3 279.6 615.1 286.4C611.9 293.2 608.3 301.6 605.6 307.6C602.9 313.5 600.0 319.8 598.9 322.3M615.6 261.1C614.6 262.7 610.4 267.7 609.7 270.4C608.9 273.1 610.6 275.2 611.0 277.5C611.4 279.9 612.7 281.6 612.0 284.5C611.2 287.4 607.3 293.2 606.3 294.9M617.5 255.8C616.1 258.6 611.4 267.0 609.6 272.6C607.7 278.2 607.6 283.6 606.3 289.2C605.1 294.9 603.3 301.5 601.9 306.5C600.6 311.5 599.0 317.2 598.4 319.3M612.7 259.4C612.0 262.0 609.6 269.8 608.5 275.1C607.3 280.4 607.0 285.6 605.9 291.0C604.7 296.4 602.7 303.1 601.6 307.7C600.6 312.3 599.9 316.7 599.5 318.5M619.4 256.2C618.5 259.2 614.8 268.6 613.6 274.4C612.4 280.3 613.1 285.8 612.2 291.4C611.2 296.9 610.2 302.3 607.9 307.7C605.7 313.2 600.2 321.4 598.7 324.1M622.7 259.2C621.4 261.6 615.7 269.2 614.5 273.4C613.3 277.6 615.9 280.6 615.6 284.5C615.4 288.4 614.4 292.3 612.9 296.6C611.3 300.8 607.4 307.9 606.3 310.1M634.9 252.4C634.6 254.1 634.3 258.7 632.6 262.3C631.0 265.9 628.0 269.5 625.1 273.9C622.2 278.3 617.6 284.0 615.1 288.5C612.6 293.0 610.9 298.9 610.0 301.0M622.9 257.7C621.6 260.5 618.0 268.5 615.4 274.4C612.8 280.3 609.8 286.9 607.4 293.2C605.0 299.5 602.7 307.1 601.0 312.1C599.3 317.1 597.9 321.3 597.3 323.1M643.9 250.4C642.2 252.9 636.2 260.3 633.2 265.3C630.2 270.3 628.8 274.7 625.7 280.2C622.6 285.7 617.7 292.8 614.5 298.3C611.3 303.9 607.7 310.9 606.4 313.4M613.6 260.2C612.7 263.3 610.0 272.5 608.4 278.9C606.8 285.2 605.3 292.3 604.0 298.3C602.8 304.3 602.0 310.1 600.7 314.9C599.4 319.7 596.8 325.0 596.1 327.1M627.2 253.7C627.0 256.5 627.9 264.2 625.9 270.6C623.9 276.9 618.4 285.1 615.4 291.7C612.3 298.3 610.9 303.8 607.6 310.1C604.4 316.4 597.9 326.3 595.9 329.6M642.6 248.1C640.9 250.3 636.0 256.5 632.8 261.0C629.6 265.4 624.9 272.5 623.3 274.8M627.8 252.3C626.2 254.7 620.0 262.2 618.0 266.7C616.0 271.2 616.2 277.4 615.8 279.5M611.5 258.9C611.5 260.4 610.9 265.5 611.6 268.3C612.3 271.2 615.0 274.7 615.7 276.0M634.0 250.1C634.9 251.1 640.5 253.3 639.3 256.1C638.0 258.9 628.7 265.2 626.6 267.0M634.3 259.6C634.3 260.3 635.2 261.9 633.9 263.7C632.7 265.5 627.9 269.2 626.7 270.3M616.3 263.0C616.8 264.2 621.2 267.0 619.7 270.6C618.3 274.2 609.5 282.3 607.5 284.7M637.3 251.2C635.6 253.2 629.7 259.2 627.3 262.9C624.9 266.7 623.7 271.8 623.0 273.6M627.5 255.0C627.3 256.3 627.8 259.7 626.5 262.5C625.3 265.3 621.0 270.3 619.9 271.9M618.0 255.2C618.6 256.9 622.9 261.2 621.6 265.5C620.3 269.8 612.1 278.5 610.2 281.0M625.6 263.3C624.9 264.8 620.7 269.9 621.0 272.0C621.4 274.1 626.5 275.2 627.6 275.8M614.1 253.9C613.5 256.0 609.8 262.8 610.3 266.3C610.8 269.8 616.1 273.5 617.2 275.0M620.3 267.1C618.4 269.5 611.6 277.0 609.1 281.5C606.6 286.0 605.7 292.1 605.0 294.3M614.6 254.4C615.4 255.6 620.3 258.6 619.3 261.9C618.3 265.1 610.3 271.9 608.5 273.9M622.6 260.3C623.6 261.5 628.7 264.7 628.7 267.9C628.7 271.2 623.4 277.8 622.3 279.7M622.0 256.9C620.5 258.8 614.9 264.4 612.6 268.0C610.3 271.6 609.1 276.7 608.4 278.4M627.8 267.1C627.5 268.9 627.2 274.0 625.8 278.0C624.4 281.9 620.4 288.8 619.3 291.0M609.5 259.9C609.3 261.3 608.1 265.9 608.6 268.5C609.2 271.1 612.1 274.2 612.8 275.3M621.0 260.6C621.5 262.3 624.3 267.0 624.4 270.6C624.4 274.3 621.8 280.5 621.2 282.5M613.3 267.9C612.8 270.3 610.9 277.8 610.0 282.6C609.0 287.4 608.1 294.5 607.8 296.8M627.0 252.2C627.8 253.7 630.6 258.4 631.5 261.3C632.4 264.3 632.4 268.5 632.6 269.9M629.4 264.1C629.9 264.8 632.2 266.6 632.4 268.3C632.6 270.0 630.7 273.3 630.3 274.3M616.2 253.2C616.9 254.2 620.4 257.0 620.5 259.3C620.6 261.7 617.3 265.9 616.7 267.3M617.8 269.7C616.5 271.5 611.3 277.6 610.3 280.6C609.4 283.7 611.8 286.7 612.1 287.9M644.2 248.5C643.2 250.6 640.3 256.5 638.1 260.6C635.9 264.8 632.1 271.1 630.9 273.2M628.4 254.2C629.7 255.7 635.7 259.7 635.9 263.4C636.0 267.0 630.4 274.0 629.3 276.1M630.8 251.1C630.8 252.9 632.9 257.6 630.7 262.1C628.4 266.6 619.6 275.3 617.4 278.0" stroke-width="0.8"/>
<path d="M609.0 252.9C608.9 257.7 609.8 271.4 608.3 281.5C606.8 291.6 602.4 305.3 600.1 313.7C597.8 322.1 595.6 328.6 594.7 331.6M646.6 245.8C644.2 250.0 637.4 261.9 632.3 270.8C627.2 279.7 622.5 289.3 616.2 299.4C609.9 309.5 598.3 326.2 594.7 331.6" stroke-width="0.7"/>
<path d="M422.4 494.9C421.4 497.1 418.3 503.8 416.6 508.4C414.9 512.9 413.6 517.6 412.2 522.3C410.8 526.9 409.4 531.6 408.0 536.3C406.6 541.0 405.3 545.7 403.9 550.3C402.5 555.0 401.1 559.7 399.7 564.3C398.3 569.0 396.9 573.7 395.4 578.3C393.8 582.9 392.2 587.5 390.6 592.1C389.0 596.7 386.5 603.6 385.7 605.9M415.7 507.2C415.2 509.3 413.5 515.4 412.5 519.5C411.4 523.7 410.5 527.8 409.5 531.9C408.5 536.0 407.4 540.1 406.3 544.2C405.3 548.2 404.3 552.4 403.2 556.4C402.0 560.5 400.7 564.5 399.5 568.5C398.2 572.6 397.1 576.6 395.9 580.6C394.6 584.6 393.2 588.6 391.8 592.6C390.5 596.6 388.5 602.7 387.8 604.7M407.7 531.7C407.1 534.3 405.3 542.3 404.0 547.6C402.7 552.9 401.3 558.1 399.9 563.4C398.5 568.6 396.9 573.8 395.4 579.0C393.9 584.2 392.4 589.4 390.8 594.6C389.2 599.8 387.6 605.0 385.9 610.2C384.2 615.3 382.3 620.4 380.4 625.5C378.5 630.6 376.7 635.7 374.6 640.8C372.6 645.8 369.2 653.3 368.1 655.8M402.9 550.5C402.7 551.1 402.3 552.9 401.9 554.2C401.6 555.4 401.2 556.6 400.8 557.8C400.4 559.0 400.1 560.2 399.7 561.4C399.2 562.6 398.6 563.7 398.3 564.9C397.9 566.1 397.7 567.4 397.3 568.6C397.0 569.8 396.6 571.0 396.2 572.2C395.7 573.4 395.1 574.5 394.6 575.6C394.1 576.8 393.5 578.6 393.3 579.2M404.9 540.1C404.6 541.5 403.8 545.6 403.2 548.3C402.6 551.0 401.8 553.6 401.2 556.3C400.5 559.0 399.8 561.6 399.0 564.3C398.3 567.0 397.6 569.6 396.8 572.3C396.1 574.9 395.5 577.6 394.6 580.2C393.8 582.8 392.7 585.4 391.8 588.0C390.9 590.6 390.0 593.2 389.1 595.9C388.2 598.5 386.8 602.4 386.4 603.7M420.8 501.4C419.8 503.8 416.9 511.2 415.2 516.2C413.5 521.2 412.1 526.4 410.6 531.5C409.1 536.6 407.7 541.7 406.1 546.8C404.4 551.9 402.6 556.9 400.9 562.0C399.2 567.0 397.7 572.1 396.0 577.2C394.2 582.2 392.3 587.2 390.5 592.3C388.7 597.3 387.0 602.4 385.1 607.4C383.1 612.3 379.9 619.7 378.9 622.2M434.3 486.8C432.7 488.3 427.4 492.7 424.7 496.2C422.0 499.7 420.0 503.6 418.0 507.6C415.9 511.5 414.2 515.8 412.6 520.1C411.0 524.3 409.7 528.7 408.2 533.0C406.6 537.3 404.8 541.5 403.2 545.8C401.7 550.1 400.2 554.4 398.8 558.7C397.3 563.1 395.9 567.4 394.5 571.7C393.1 576.1 390.9 582.6 390.2 584.7M412.1 527.2C411.0 529.8 407.5 537.6 405.3 542.8C403.2 548.0 401.1 553.3 399.2 558.6C397.3 563.9 395.5 569.2 393.7 574.6C392.0 579.9 390.4 585.3 388.8 590.7C387.1 596.1 385.6 601.5 384.0 606.9C382.4 612.3 380.7 617.6 379.2 623.1C377.7 628.5 376.3 633.9 375.0 639.4C373.7 644.9 372.1 653.3 371.5 656.0M402.6 550.4C402.2 552.0 401.4 557.0 400.7 560.2C399.9 563.4 398.8 566.6 398.0 569.8C397.1 573.0 396.4 576.2 395.5 579.4C394.5 582.6 393.3 585.7 392.3 588.9C391.3 592.0 390.6 595.3 389.5 598.5C388.5 601.6 387.4 604.7 386.1 607.8C384.8 610.9 383.3 613.9 382.0 617.0C380.7 620.1 378.7 624.7 378.1 626.2M399.7 555.9C399.8 556.4 400.1 558.0 400.2 559.0C400.3 560.1 400.3 561.1 400.3 562.0C400.2 563.0 400.0 563.9 399.8 564.9C399.6 565.8 399.4 566.7 399.1 567.6C398.8 568.5 398.3 569.3 397.9 570.2C397.6 571.1 397.3 572.0 396.9 572.9C396.5 573.7 395.9 574.5 395.3 575.4C394.8 576.2 393.8 577.4 393.5 577.8" stroke-width="0.65"/>
<path d="M426.0 493.5C425.3 494.3 422.8 496.4 421.6 498.1C420.3 499.8 419.5 501.8 418.5 503.7C417.5 505.5 416.3 507.4 415.3 509.3C414.3 511.2 413.3 513.2 412.5 515.2C411.7 517.2 410.8 520.3 410.5 521.3M424.8 491.4C423.9 493.1 421.0 497.8 419.4 501.1C417.9 504.4 416.7 507.8 415.5 511.3C414.3 514.7 413.4 518.2 412.3 521.6C411.2 525.1 410.2 528.6 409.0 532.0C407.8 535.4 405.7 540.5 405.1 542.2M437.4 479.9C436.0 481.5 431.7 486.6 429.0 489.9C426.2 493.3 423.2 496.3 421.1 500.0C418.9 503.7 417.6 508.0 416.1 512.1C414.7 516.1 413.7 520.3 412.3 524.4C411.0 528.6 408.7 534.7 407.9 536.8M422.7 494.1C422.0 495.4 419.7 499.1 418.6 501.7C417.5 504.3 416.8 507.1 415.9 509.7C415.1 512.4 414.1 515.0 413.3 517.6C412.5 520.3 411.8 523.1 411.2 525.8C410.5 528.5 409.5 532.6 409.2 534.0M428.6 489.3C427.8 490.2 425.3 492.8 424.0 494.7C422.6 496.5 421.5 498.5 420.4 500.5C419.2 502.6 418.2 504.7 417.1 506.9C416.1 509.0 415.0 511.1 414.0 513.2C412.9 515.3 411.2 518.5 410.7 519.6M422.7 495.1C422.3 496.0 421.0 498.6 420.3 500.4C419.7 502.2 419.3 504.2 418.7 506.0C418.1 507.9 417.6 509.7 416.8 511.5C416.1 513.2 415.0 514.8 414.2 516.5C413.3 518.3 412.1 520.9 411.7 521.8M428.5 492.0C427.8 492.8 425.4 495.2 424.2 496.8C422.9 498.4 422.0 500.0 421.1 501.8C420.2 503.7 419.5 505.9 418.7 507.9C417.8 509.8 416.7 511.8 416.0 513.8C415.3 515.8 414.7 518.9 414.5 519.9" stroke-width="0.65"/>
<path d="M397.3 567.5C396.6 569.5 394.2 575.2 392.8 579.2C391.5 583.1 390.3 587.1 389.2 591.1C388.0 595.0 386.9 599.0 385.8 603.0C384.8 607.0 383.8 611.1 382.9 615.1C382.0 619.2 381.0 625.4 380.6 627.4M410.8 530.9C409.5 534.0 405.5 543.2 403.0 549.4C400.4 555.6 397.9 561.8 395.8 568.1C393.6 574.4 391.7 580.8 389.9 587.2C388.1 593.6 386.6 600.1 385.2 606.7C383.8 613.2 382.1 623.1 381.4 626.4M407.5 539.1C406.1 542.3 401.6 551.9 399.0 558.4C396.4 564.9 393.9 571.5 391.8 578.1C389.7 584.8 388.2 591.6 386.5 598.4C384.8 605.2 383.0 611.9 381.6 618.8C380.1 625.6 378.2 636.0 377.6 639.5M411.5 516.7C410.5 521.1 407.3 534.3 405.1 543.0C403.0 551.7 400.7 560.5 398.4 569.1C396.1 577.8 393.8 586.5 391.2 595.1C388.6 603.7 385.6 612.2 382.7 620.7C379.8 629.2 375.3 642.0 373.9 646.2M401.5 557.8C400.4 560.7 396.9 569.4 395.0 575.3C393.0 581.2 391.4 587.2 389.6 593.2C387.8 599.1 386.2 605.1 384.4 611.1C382.6 617.1 380.6 622.9 378.9 628.9C377.3 634.9 375.1 644.0 374.4 647.1M412.3 517.0C411.3 521.1 408.3 533.2 406.2 541.3C404.1 549.4 402.0 557.4 399.8 565.4C397.5 573.5 395.1 581.4 392.7 589.4C390.3 597.4 388.1 605.4 385.5 613.3C382.9 621.3 378.6 633.0 377.2 636.9M397.5 563.5C396.9 566.0 395.2 573.6 394.1 578.7C392.9 583.7 392.0 588.8 390.7 593.8C389.5 598.9 388.2 603.8 386.7 608.8C385.3 613.8 383.7 618.7 382.0 623.6C380.4 628.5 377.6 635.7 376.7 638.2" stroke-width="0.65"/>
<path d="M369.500 640.200C374 633 379 626 383.600 618.700M438 484L443 480" stroke-width="0.6"/>
<path d="M603.7 501.0C605.7 504.3 611.6 514.3 615.5 520.9C619.5 527.6 623.6 534.1 627.5 540.8C631.4 547.5 635.1 554.3 638.9 560.9C642.8 567.6 646.8 574.2 650.6 580.9C654.4 587.6 658.1 594.4 661.7 601.2C665.3 608.0 668.9 614.9 672.4 621.8C675.9 628.7 679.3 635.6 682.8 642.5C686.2 649.4 691.3 659.8 693.0 663.3M611.0 511.3C612.1 513.1 615.3 518.6 617.6 522.2C619.9 525.8 622.4 529.3 624.7 532.8C626.9 536.4 629.0 540.2 631.1 543.8C633.3 547.4 635.6 551.0 637.7 554.7C639.8 558.4 641.9 562.1 644.0 565.8C646.2 569.4 648.6 572.9 650.7 576.6C652.8 580.3 654.7 584.1 656.7 587.8C658.6 591.6 661.4 597.4 662.3 599.3M590.0 470.2C591.4 473.1 595.6 481.8 598.6 487.5C601.5 493.2 604.5 498.9 607.6 504.5C610.6 510.2 613.7 515.8 616.8 521.4C619.9 527.1 623.0 532.7 626.0 538.3C629.1 543.9 632.2 549.6 635.4 555.2C638.6 560.7 642.0 566.2 645.3 571.7C648.6 577.2 651.8 582.7 655.0 588.3C658.2 593.8 662.9 602.3 664.5 605.1M621.9 531.0C624.1 534.5 630.8 544.8 635.1 551.8C639.4 558.8 643.6 565.8 647.8 572.8C651.9 579.9 656.1 586.9 660.1 594.1C664.0 601.3 667.6 608.7 671.3 616.0C675.1 623.3 678.9 630.5 682.7 637.8C686.4 645.1 690.1 652.4 693.6 659.8C697.2 667.2 700.5 674.7 704.0 682.1C707.5 689.5 712.9 700.5 714.7 704.2M605.4 497.2C607.6 500.9 614.0 511.8 618.2 519.2C622.4 526.5 626.6 533.8 630.8 541.2C635.0 548.5 639.2 555.9 643.4 563.2C647.7 570.5 652.3 577.6 656.4 585.0C660.5 592.4 664.3 600.0 668.2 607.5C672.1 615.0 675.9 622.6 679.8 630.1C683.8 637.6 687.9 644.9 691.8 652.5C695.7 660.0 701.3 671.4 703.2 675.2M630.6 547.1C631.3 548.0 633.5 550.8 634.9 552.7C636.3 554.6 637.8 556.5 639.2 558.4C640.6 560.3 642.0 562.2 643.3 564.2C644.6 566.1 645.7 568.2 646.9 570.2C648.1 572.2 649.3 574.3 650.4 576.3C651.5 578.4 652.5 580.5 653.5 582.6C654.6 584.8 655.6 586.9 656.6 589.0C657.5 591.2 658.7 594.5 659.1 595.6M614.0 511.3C615.5 514.4 620.1 523.8 623.3 530.0C626.5 536.2 629.7 542.4 633.0 548.5C636.3 554.7 639.7 560.7 643.0 566.9C646.4 573.0 649.7 579.1 653.0 585.2C656.3 591.3 659.6 597.5 662.9 603.6C666.2 609.7 669.5 615.8 672.9 621.9C676.3 628.0 679.6 634.2 683.0 640.2C686.5 646.3 691.9 655.2 693.7 658.2M613.4 509.7C615.2 513.1 620.5 523.4 624.2 530.2C627.8 537.0 631.5 543.8 635.2 550.6C638.9 557.4 642.7 564.1 646.5 570.8C650.3 577.6 654.1 584.2 657.9 591.0C661.6 597.8 665.1 604.7 668.7 611.5C672.3 618.3 675.9 625.1 679.5 632.0C683.2 638.8 686.7 645.6 690.4 652.4C694.1 659.2 699.9 669.3 701.8 672.6M603.2 493.3C604.8 496.2 609.7 504.9 612.9 510.7C616.1 516.5 619.2 522.4 622.3 528.3C625.5 534.1 628.6 540.0 631.8 545.8C634.9 551.7 638.2 557.4 641.5 563.2C644.7 569.0 648.0 574.8 651.2 580.6C654.3 586.4 657.5 592.3 660.6 598.2C663.6 604.0 666.7 610.0 669.7 615.9C672.7 621.8 677.3 630.6 678.8 633.6M601.9 496.5C603.4 498.8 608.0 505.8 610.9 510.5C613.8 515.2 616.7 520.0 619.6 524.8C622.4 529.5 625.4 534.2 628.2 539.0C631.1 543.7 633.9 548.5 636.6 553.4C639.2 558.3 641.7 563.2 644.4 568.1C647.0 573.0 650.0 577.7 652.6 582.6C655.1 587.5 657.5 592.5 659.8 597.6C662.2 602.6 665.5 610.3 666.6 612.8M635.0 546.9C636.5 549.9 641.0 559.0 644.0 565.0C647.1 571.0 650.2 577.0 653.3 583.0C656.4 589.0 659.5 594.9 662.5 601.0C665.5 607.0 668.5 613.0 671.5 619.1C674.5 625.1 677.6 631.0 680.7 637.0C683.8 643.0 686.9 649.0 690.0 655.0C693.1 661.0 696.2 667.0 699.4 672.9C702.6 678.8 707.7 687.6 709.3 690.5M609.0 504.5C610.1 506.7 613.2 513.1 615.4 517.3C617.5 521.6 619.7 525.8 622.0 530.0C624.3 534.2 626.7 538.3 629.0 542.4C631.3 546.6 633.4 550.9 635.6 555.1C637.9 559.3 640.3 563.4 642.6 567.6C644.9 571.7 647.2 575.9 649.6 580.0C651.9 584.1 654.4 588.2 656.7 592.3C659.1 596.5 662.4 602.8 663.5 604.9" stroke-width="0.7"/>
<path d="M606.1 498.4C607.3 500.6 610.8 507.0 613.2 511.2C615.6 515.4 618.1 519.6 620.5 523.8C622.9 528.1 625.3 532.3 627.7 536.5C630.1 540.8 632.4 545.0 634.8 549.3C637.2 553.5 640.7 559.9 641.9 562.1M604.1 496.6C605.5 499.6 609.9 508.7 612.9 514.7C616.0 520.7 619.2 526.6 622.5 532.5C625.8 538.3 629.4 544.0 632.8 549.8C636.2 555.6 639.6 561.5 643.0 567.2C646.5 573.0 651.8 581.6 653.6 584.4M605.7 501.9C607.2 504.1 611.7 510.6 614.5 515.0C617.4 519.4 620.0 524.0 622.7 528.5C625.3 533.0 627.9 537.6 630.4 542.2C632.9 546.8 635.3 551.4 637.6 556.1C640.0 560.8 643.3 568.0 644.4 570.4M595.1 482.1C596.3 484.5 600.1 491.8 602.7 496.7C605.2 501.5 607.7 506.4 610.4 511.2C613.0 516.0 615.8 520.8 618.5 525.5C621.2 530.3 623.9 535.1 626.7 539.8C629.4 544.6 633.6 551.6 635.0 554.0M598.5 491.5C599.8 493.0 603.6 497.5 606.0 500.6C608.4 503.8 610.8 506.9 612.9 510.2C615.0 513.5 616.8 516.9 618.6 520.4C620.4 523.8 622.1 527.3 623.7 530.9C625.4 534.4 627.7 539.8 628.5 541.6M605.5 496.4C607.1 499.2 612.2 507.9 615.4 513.7C618.6 519.5 621.6 525.5 624.8 531.4C627.9 537.3 631.2 543.1 634.3 549.0C637.4 554.9 640.3 560.9 643.3 566.9C646.4 572.8 651.0 581.7 652.5 584.7M592.9 480.0C594.6 483.2 599.7 492.9 603.2 499.2C606.7 505.6 610.3 511.9 613.9 518.2C617.5 524.5 621.1 530.8 624.9 537.0C628.7 543.2 632.8 549.3 636.7 555.4C640.6 561.6 646.5 570.8 648.4 573.8" stroke-width="0.7"/>
<path d="M672.7 618.5C673.8 620.5 677.1 626.5 679.3 630.5C681.4 634.5 683.3 638.7 685.4 642.7C687.5 646.7 689.8 650.7 691.9 654.7C694.0 658.8 696.0 662.9 698.1 666.9C700.3 670.9 703.6 676.9 704.7 678.9M671.8 620.3C673.5 623.4 678.8 632.6 682.2 638.8C685.7 645.0 689.1 651.1 692.5 657.3C695.9 663.5 699.2 669.8 702.6 676.0C705.9 682.3 709.2 688.5 712.3 694.8C715.5 701.1 720.0 710.7 721.6 713.9M666.5 606.0C668.3 609.7 673.7 621.0 677.4 628.5C681.1 636.0 684.9 643.3 688.6 650.8C692.3 658.3 695.9 665.8 699.5 673.4C703.1 680.9 706.5 688.5 710.0 696.0C713.6 703.6 719.0 714.9 720.8 718.6M657.6 593.8C659.3 597.1 664.4 607.1 667.9 613.7C671.3 620.3 674.7 627.0 678.2 633.6C681.8 640.1 685.5 646.6 689.1 653.2C692.6 659.7 696.0 666.4 699.6 672.9C703.1 679.5 708.7 689.3 710.5 692.5M662.8 599.0C664.9 603.0 671.0 615.1 675.3 623.2C679.5 631.2 683.9 639.1 688.1 647.2C692.3 655.2 696.3 663.3 700.5 671.4C704.7 679.4 709.0 687.4 713.2 695.4C717.4 703.5 723.5 715.6 725.6 719.6M682.8 640.9C684.1 643.6 688.1 651.7 690.7 657.1C693.3 662.6 695.8 668.1 698.4 673.5C701.1 679.0 703.8 684.4 706.5 689.7C709.2 695.1 712.0 700.5 714.8 705.9C717.6 711.2 721.7 719.3 723.1 721.9M659.7 595.6C660.9 598.2 664.8 605.8 667.2 611.0C669.7 616.1 672.0 621.4 674.6 626.5C677.2 631.6 680.0 636.6 682.8 641.6C685.5 646.6 688.3 651.6 691.1 656.6C694.0 661.5 698.5 668.9 699.9 671.3" stroke-width="0.7"/>
<path d="M608.300 436.800L605.500 452.700M607.600 438.500L605.200 450" stroke-width="1.100"/>
</g>
<g fill="#141414" stroke="#141414" stroke-width="0.2">
<text x="534.0" y="236.0" font-size="10.1" fill="#111" textLength="27.0" lengthAdjust="spacingAndGlyphs" text-anchor="middle">45 cm</text>
<text x="569.0" y="358.8" font-size="10.1" fill="#111" textLength="41.0" lengthAdjust="spacingAndGlyphs" text-anchor="middle">37.05 cm</text>
<text x="644.2" y="470.9" font-size="10.1" fill="#111" textLength="39.3" lengthAdjust="spacingAndGlyphs" text-anchor="middle">17.07 cm</text>
<text x="491.2" y="498.2" font-size="10.1" fill="#111" textLength="27.0" lengthAdjust="spacingAndGlyphs" text-anchor="middle">20 cm</text>
<text x="535.8" y="728.6" font-size="10.1" fill="#111" textLength="40.5" lengthAdjust="spacingAndGlyphs" text-anchor="middle">50.05 cm</text>
<text x="730.5" y="438.5" font-size="10.1" fill="#111" textLength="35.0" lengthAdjust="spacingAndGlyphs" text-anchor="middle">4.45 cm</text>
<text x="344.5" y="356.0" font-size="9.2" fill="#111" textLength="21.0" lengthAdjust="spacingAndGlyphs" text-anchor="middle" transform="rotate(-90 344.5 356.0)">32cm</text>
<text x="371.3" y="376.8" font-size="9.2" fill="#111" textLength="23.0" lengthAdjust="spacingAndGlyphs" text-anchor="middle" transform="rotate(-90 371.3 376.8)">28 cm</text>
<text x="301.7" y="576.4" font-size="10.1" fill="#111" textLength="27.0" lengthAdjust="spacingAndGlyphs" text-anchor="middle" transform="rotate(-90 301.7 576.4)">40 cm</text>
<text x="724.6" y="290.2" font-size="10.1" fill="#111" textLength="21.0" lengthAdjust="spacingAndGlyphs" text-anchor="middle" transform="rotate(-90 724.6 290.2)">7 cm</text>
<text x="724.6" y="364.2" font-size="10.1" fill="#111" textLength="41.0" lengthAdjust="spacingAndGlyphs" text-anchor="middle" transform="rotate(-90 724.6 364.2)">15.05 cm</text>
<text x="755.4" y="469.5" font-size="10.1" fill="#111" textLength="27.0" lengthAdjust="spacingAndGlyphs" text-anchor="middle" transform="rotate(-90 755.4 469.5)">75 cm</text>
<text x="410.0" y="678.4" font-size="8" fill="#111" textLength="12.5" lengthAdjust="spacingAndGlyphs" text-anchor="middle" transform="rotate(42 410.0 678.4)">75 °</text>
<text x="382.4" y="692.0" font-size="8" fill="#111" textLength="12.5" lengthAdjust="spacingAndGlyphs" text-anchor="middle" transform="rotate(42 382.4 692.0)">79 °</text>
<text x="766.2" y="677.0" font-size="8" fill="#111" textLength="16.0" lengthAdjust="spacingAndGlyphs" text-anchor="middle" transform="rotate(38 766.2 677.0)">115 °</text>
<text x="735.7" y="696.2" font-size="8" fill="#111" textLength="16.0" lengthAdjust="spacingAndGlyphs" text-anchor="middle" transform="rotate(38 735.7 696.2)">135 °</text>
</g>
<g fill="none" stroke="#2a2a2a" stroke-width="0.6">
<path d="M824.300 588.200H869.400M830.400 607H874.400M826.800 718.100H873.400M842.700 619.100H858.500M839.300 707H855.500M855.500 662.300H1031.800M890.600 608.600V712.600M915.500 605.600V713.600M961.500 604H1023.500M1003 619.100H1025.800M985.200 631.400H1007M982.300 691.200H1007M1005 712.200H1027.800M958.500 720.500H1019.900"/>
</g>
<g fill="none" stroke="#222" stroke-width="0.6">
<path d="M827.2 589.8V735.3"/><path d="M827.2 589.8L828.1 592.4L826.3 592.4z" fill="#222" stroke="none"/><path d="M827.2 735.3L826.3 732.7L828.1 732.7z" fill="#222" stroke="none"/>
<path d="M836.3 607.6V718.1"/><path d="M836.3 607.6L837.2 610.2L835.4 610.2z" fill="#222" stroke="none"/><path d="M836.3 718.1L835.4 715.5L837.2 715.5z" fill="#222" stroke="none"/>
<path d="M844.9 620.5V705.6"/><path d="M844.9 620.5L845.8 623.1L844.0 623.1z" fill="#222" stroke="none"/><path d="M844.9 705.6L844.0 703.0L845.8 703.0z" fill="#222" stroke="none"/>
<path d="M855.1 589.8V606.6"/><path d="M855.1 589.8L856.0 592.4L854.2 592.4z" fill="#222" stroke="none"/><path d="M855.1 606.6L854.2 604.0L856.0 604.0z" fill="#222" stroke="none"/>
<path d="M858.1 719.5V735.3"/><path d="M858.1 719.5L859.0 722.1L857.2 722.1z" fill="#222" stroke="none"/><path d="M858.1 735.3L857.2 732.7L859.0 732.7z" fill="#222" stroke="none"/>
<path d="M1004.1 632.4V690.2"/><path d="M1004.1 632.4L1005.0 635.0L1003.2 635.0z" fill="#222" stroke="none"/><path d="M1004.1 690.2L1003.2 687.6L1005.0 687.6z" fill="#222" stroke="none"/>
<path d="M1017.9 609.6V719.5"/><path d="M1017.9 609.6L1018.8 612.2L1017.0 612.2z" fill="#222" stroke="none"/><path d="M1017.9 719.5L1017.0 716.9L1018.8 716.9z" fill="#222" stroke="none"/>
</g>
<g fill="none" stroke="#000" stroke-width="0.75" stroke-linecap="round">
<circle cx="873" cy="601.300" r="10.300"/><circle cx="874.400" cy="727.400" r="10.300"/>
<path d="M869.4 589.4C870.6 589.2 874.2 587.8 876.3 588.2C878.5 588.6 880.7 589.9 882.3 591.8C883.8 593.7 885.2 596.9 885.6 599.7C886.1 602.5 885.6 606.2 884.9 608.6C884.1 611.0 881.9 613.1 881.3 614.0M879.7 590.6l2.200 1.200M880.9 593.4l2.200 1.200M882.1 596.1l2.200 1.200M883.3 598.9l2.200 1.200M884.5 601.7l2.200 1.200M885.6 604.5l2.200 1.200M886.8 607.2l2.200 1.200M888.0 610.0l2.200 1.200" stroke-width="0.8"/>
<path d="M865.4 728.4C865.8 729.4 866.1 732.9 867.4 734.4C868.7 735.8 871.4 736.9 873.4 737.3C875.3 737.7 878.3 736.8 879.3 736.7"/>
<path d="M877.3 588.8C881.9 588.9 896.5 588.6 905.0 589.4C913.6 590.2 920.9 591.1 928.8 593.8C936.7 596.5 945.6 601.2 952.6 605.6C959.5 610.1 965.4 615.0 970.4 620.5C975.4 625.9 979.6 633.2 982.7 638.3C985.7 643.4 987.5 647.2 988.8 651.2C990.1 655.1 990.5 658.4 990.6 662.1C990.7 665.7 990.3 668.8 989.4 673.0C988.5 677.1 987.8 681.9 985.2 686.8C982.7 691.8 978.5 698.1 974.4 702.7C970.2 707.3 965.4 711.0 960.5 714.6C955.5 718.1 949.9 721.4 944.7 724.1C939.4 726.7 934.8 728.7 928.8 730.4C922.9 732.1 915.6 733.5 909.0 734.4C902.4 735.2 892.5 735.3 889.2 735.5"/>
<path d="M885.2 590.2C889.2 590.4 901.1 590.4 909.0 591.4C916.9 592.4 925.5 593.4 932.8 596.1C940.0 598.8 947.0 603.9 952.6 607.6C958.2 611.4 962.0 613.6 966.4 618.5C970.9 623.5 976.2 631.9 979.3 637.3C982.4 642.8 983.8 647.1 985.0 651.2C986.3 655.3 986.5 658.4 986.6 662.1C986.7 665.7 986.4 669.0 985.6 673.0C984.9 676.9 984.3 681.2 981.9 685.8C979.5 690.5 975.3 696.3 971.4 700.7C967.5 705.1 963.3 708.7 958.5 712.2C953.7 715.6 948.0 718.9 942.7 721.5C937.4 724.0 932.8 725.8 926.8 727.4C920.9 729.1 913.8 730.7 907.0 731.4C900.3 732.0 889.7 731.4 886.2 731.4"/>
<path d="M886.2 599.7C890.0 599.4 901.9 597.5 909.0 597.7C916.1 598.0 922.5 599.3 928.8 601.3C935.1 603.3 941.0 606.1 946.6 609.6C952.2 613.1 957.7 617.4 962.5 622.5C967.3 627.6 972.3 635.3 975.3 640.3C978.4 645.2 979.5 648.5 980.7 652.2C981.8 655.8 982.2 658.8 982.3 662.1C982.4 665.4 982.0 668.3 981.3 672.0C980.6 675.6 980.1 679.4 977.9 683.9C975.8 688.3 972.1 694.4 968.4 698.7C964.7 703.0 960.5 706.4 955.5 709.6C950.6 712.8 944.5 715.9 938.7 718.1C932.9 720.3 926.8 721.8 920.9 722.9C915.0 723.9 908.8 724.4 903.1 724.5C897.3 724.6 889.0 723.6 886.2 723.5"/>
<path d="M886.2 594.8C890.7 594.7 904.6 593.3 913.0 594.2C921.4 595.0 929.5 596.6 936.7 599.7C944.0 602.8 950.6 607.6 956.5 612.6C962.5 617.5 968.2 624.1 972.4 629.4C976.6 634.7 979.5 640.0 981.9 644.3C984.3 648.5 985.6 652.0 986.6 655.1C987.7 658.3 988.0 659.8 988.0 663.1C988.1 666.4 987.7 670.7 986.8 675.0C985.9 679.2 985.7 683.5 982.7 688.8C979.6 694.1 974.1 701.5 968.4 706.6C962.7 711.7 955.2 716.2 948.6 719.5C942.0 722.8 936.1 725.0 928.8 726.4C921.6 727.9 912.1 728.3 905.0 728.4C898.0 728.6 889.4 727.6 886.2 727.4"/>
<path d="M886.2 607.6C889.0 607.5 897.3 607.3 903.1 606.6C908.8 606.0 916.3 604.7 920.9 603.7C925.5 602.7 929.1 601.2 930.8 600.7M886.2 603.7C889.4 603.8 898.6 604.3 905.0 604.7C911.5 605.0 921.6 605.8 924.9 606.0"/>
<path d="M885.2 718.5C888.5 718.6 898.4 719.2 905.0 718.9C911.7 718.6 919.6 717.8 924.9 716.5C930.1 715.3 934.8 712.4 936.7 711.6M869.4 712.6C872.7 712.9 881.9 714.1 889.2 714.6C896.5 715.0 905.0 715.9 913.0 715.5C920.9 715.1 930.1 713.7 936.7 712.2C943.3 710.7 949.9 707.6 952.6 706.6"/>
<path d="M866.4 609.6C865.3 611.7 861.3 617.9 859.5 622.5C857.7 627.1 856.5 630.7 855.5 637.3C854.6 643.9 854.0 654.8 854.0 662.1C853.9 669.3 854.4 674.8 855.1 680.9C855.9 687.0 857.1 692.8 858.5 698.7C859.9 704.7 862.6 713.6 863.5 716.5"/>
<path d="M868.6 612.0C867.4 613.9 863.3 619.1 861.5 623.5C859.6 627.9 858.4 631.9 857.5 638.3C856.6 644.8 856.0 655.0 855.9 662.1C855.9 669.2 856.4 675.0 857.1 680.9C857.9 686.8 859.0 691.9 860.5 697.7C861.9 703.5 865.0 712.6 865.8 715.5"/>
<path d="M871.4 612.6C871.7 613.6 872.1 616.6 873.0 618.5C873.8 620.4 875.2 623.0 876.3 623.9C877.5 624.8 878.6 624.6 879.7 623.9C880.8 623.1 882.1 621.3 882.9 619.5C883.7 617.7 884.2 614.2 884.5 613.2"/>
<path d="M869.4 713.0C870.2 711.6 872.7 706.9 874.4 704.7C876.0 702.4 877.8 700.4 879.3 699.7C880.9 699.0 882.2 699.2 883.7 700.7C885.1 702.2 886.6 705.8 888.2 708.6C889.8 711.4 892.3 716.0 893.2 717.5M861.5 699.7L889.2 716.5M866.4 712.6L893.2 717.5"/>
<path d="M915.0 630.4C914.6 630.1 913.0 629.3 912.6 628.4C912.1 627.5 912.0 626.0 912.2 625.0C912.4 624.1 913.5 622.9 913.8 622.5L944.7 620.5L996.1 612.6L1002.1 612.0L1002.5 617.5L996.1 618.7L960.5 626.4L944.7 630.0L915.0 630.4M944.7 620.5L944.7 630.0M996.1 612.6L996.1 618.7"/>
<path d="M913.0 695.1L940.7 693.8L997.1 705.6L1003.1 706.6L1003.1 712.2L997.1 711.2L960.5 704.7L940.7 703.1L913.0 703.1zM940.7 693.8L940.7 703.1M997.1 705.6L997.1 711.2"/>
</g>
<g fill="#2a2a2a">
<text x="824.9" y="662.5" font-size="4.5" fill="#111" text-anchor="middle" transform="rotate(-90 824.9 662.5)">45 cm</text>
<text x="834.8" y="662.5" font-size="4.5" fill="#111" text-anchor="middle" transform="rotate(-90 834.8 662.5)">45 cm</text>
<text x="842.7" y="662.5" font-size="4.5" fill="#111" text-anchor="middle" transform="rotate(-90 842.7 662.5)">37 cm</text>
<text x="851.8" y="599.3" font-size="4.5" fill="#111" text-anchor="middle" transform="rotate(-90 851.8 599.3)">11 cm</text>
<text x="853.2" y="727.4" font-size="4.5" fill="#111" text-anchor="middle" transform="rotate(-90 853.2 727.4)">11 cm</text>
<text x="1001.7" y="662.5" font-size="4.5" fill="#111" text-anchor="middle" transform="rotate(-90 1001.7 662.5)">37cm</text>
<text x="1015.0" y="662.5" font-size="4.5" fill="#111" text-anchor="middle" transform="rotate(-90 1015.0 662.5)">40cm</text>
<text x="1009.5" y="612.4" font-size="4" fill="#111" text-anchor="middle">7.5cm</text>
<text x="1009.5" y="706.2" font-size="4" fill="#111" text-anchor="middle">7.5cm</text>
</g>
</svg>
<div style="left:0.0px;top:92.0px;width:32.0px;height:483.0px;background:#414143;"></div>
<div style="left:0.0px;top:92.0px;width:32.0px;height:7.4px;background:#171a22;"></div>
<div style="left:27.2px;top:94.2px;width:3.0px;height:3.0px;background:#f4f4f4;border-radius:50%;"></div>
<div style="left:4.0px;top:218.7px;width:24.6px;height:1.4px;background:#2a2a2c;"></div>
<div style="left:3.0px;top:511.3px;width:25.0px;height:1.4px;background:#2a2a2c;"></div>
<div style="left:6.9px;top:527.0px;width:11.1px;height:11.6px;background:#ffffff;"></div>
<div style="left:12.9px;top:533.7px;width:11.4px;height:11.3px;background:#c9f1ee;"></div>
<div style="left:5.0px;top:555.7px;width:6.6px;height:5.7px;background:#77777a;"></div>
<div style="left:11.6px;top:555.7px;width:6.7px;height:5.7px;background:#19a7a8;"></div>
<div style="left:18.3px;top:555.7px;width:6.7px;height:5.7px;background:#e8d21f;"></div>
<svg width="40" height="909" viewBox="0 0 40 909"><g fill="none" stroke="#e6e6e6" stroke-width="1" stroke-linejoin="round" stroke-linecap="round"><path d="M20.800 110.300L8.300 116.400L12.400 118.200L7.400 122.500L9.400 124.500L14.300 120.300L16.300 124.300z" fill="#77797f"/><circle cx="11.500" cy="142.500" r="6" fill="#6f7380"/><rect x="12.500" y="144" width="11" height="10.500" fill="#6f7380"/><circle cx="17.200" cy="172.500" r="5.300" stroke-width="1.300"/><path d="M13.300 176.800L6.500 183" stroke-width="2.200"/><circle cx="12.800" cy="200.500" r="4.600" stroke-width="1.300"/><path d="M9.500 204.300L4 209.500" stroke-width="2.200"/><path d="M21.300 196.500v5M18.800 199h5" stroke-width="1.200"/><path d="M17.500 203.500h7v4.500c-2 1.500-5 1.500-7 0z" fill="#8c8c8c" stroke-width="0.8"/><path d="M13.200 234.500h2.600v14.500l-1.300 2.500l-1.300-2.500z"/><path d="M6.500 250c5 3.500 11 3.500 16 0"/><path d="M9 267L20 279.500H9zM11.600 265.800L22.300 278.300M9 267l2.600-1.200M20 279.500l2.300-1.200"/><rect x="8.600" y="293.500" width="13.400" height="12.500" fill="#6f7786" stroke-dasharray="2.200 1.600" stroke-width="0.9"/><path d="M7.600 292.500h2.400v2.400h-2.400zM20.400 292.500h2.400v2.400h-2.400zM7.600 304.600h2.400v2.400h-2.400zM20.400 304.600h2.400v2.400h-2.400z" fill="#e6e6e6" stroke="none"/><path d="M15.300 296v7.500" stroke="#2c3038" stroke-width="0.8"/><path d="M8 322.500H22.700V336.500H20.300V324.700H8z" stroke-width="0.8"/><path d="M19.500 325.800L10.300 328.300L13.300 330L9.500 333.600L11.200 335.300L15 331.700L16.800 334.500z" fill="#77797f" stroke-width="0.9"/><rect x="7.300" y="344.800" width="16.200" height="15.400" stroke-width="1.100"/><path d="M7.300 348.800h16.200M7.300 352.600h16.200M7.300 356.400h16.200" stroke-width="0.8"/><path d="M21.800 346.800L11.500 350.800L14.600 352.200L9.600 357L11.400 358.600L16.300 353.900L18 357z" fill="#5a5c62" stroke-width="0.9"/><path d="M7.500 372.500l5-1.500 4.500 1.500 5.500-1.500v13l-5.500 1.500-4.500-1.500-5 1.500zM12.500 371v13M17 372.500v13"/><path d="M10 397.500v15.500h15.500M10 413L21.500 401.500" stroke-width="1.200"/><path d="M10 399.500L10 413L21 402z" fill="#8c909b" stroke="none"/><circle cx="6" cy="398.500" r="1.700" stroke-width="0.9"/><path d="M6 395.500v-1M6 401.500v1M3 398.500h-1M9 398.500h1M3.800 396.300l-.7-.7M8.200 396.300l.7-.7M3.800 400.700l-.7.7" stroke-width="0.7"/><path d="M7.500 434c1-2.500 7-3 9.500-.5 2 2 2.500 5.500 4.500 8 1.500 1.500 3.500 1.500 5.500.5" stroke-width="1.200"/><path d="M7.500 434c-.5 3 0 6 1.500 8.500 3 1.500 9 2 12.500 1.500 2 0 4-1 5.500-2"/><path d="M8.500 434.500c2.500-1.500 6-1 7.500 1 1 2 1 4.500-.5 6-2 .5-5 .5-6.500-.5-1-2-1-4.500-.5-6.500z" fill="#8c8c8c" stroke-width="0.6"/><circle cx="26.800" cy="442.200" r="1" fill="#e6e6e6"/><path d="M8.500 467.500h13.500M15.500 460.500v15M9.500 471.500h11M18.500 462v11" stroke-width="1.600"/><path d="M10 473L21 461.500" stroke-width="2.200"/><path d="M8 489.500c-2.500 2.500-2.500 6.500 0 9M22.500 489.500c2.500 2.500 2.500 6.500 0 9" stroke-width="1.600"/><path d="M9.500 494l5.500-3.500 6 3.500-6 3.500z" fill="#8c8c8c"/><path d="M6.500 488l2.500.5-.5 2.500M24 488l-2.500.5.500 2.500M6.500 500l2.500-.5-.5-2.500M24 500l-2.500-.5.500-2.500" stroke-width="1"/></g></svg>
<div style="left:1215.0px;top:94.8px;width:60.0px;height:23.8px;background:#414143;"></div>
<div style="left:1215.0px;top:94.8px;width:60.0px;height:5.7px;background:#17171a;"></div>
<div style="left:1271.2px;top:96.0px;width:2.6px;height:2.6px;background:#f4f4f4;border-radius:50%;"></div>
<span class="t" style="left:1241.0px;top:105.1px;font-size:11.5px;color:#e8e8e8;transform:scaleX(0.9101);">Link</span>
<div style="left:1215.0px;top:121.0px;width:60.0px;height:23.8px;background:#414143;"></div>
<div style="left:1215.0px;top:121.0px;width:60.0px;height:5.7px;background:#17171a;"></div>
<div style="left:1271.2px;top:122.2px;width:2.6px;height:2.6px;background:#f4f4f4;border-radius:50%;"></div>
<span class="t" style="left:1241.0px;top:131.3px;font-size:11.5px;color:#e8e8e8;transform:scaleX(0.8269);">Play</span>
<svg width="1513" height="160" viewBox="0 0 1513 160"><g fill="none" stroke="#e8e8e8" stroke-width="1.200" transform="translate(1226.200 109.700) rotate(-38)"><rect x="-5.500" y="-2" width="6" height="4" rx="2"/><rect x="-0.500" y="-2" width="6" height="4" rx="2"/></g><path d="M1220.800 131.200l8.300 4.300-8.300 4.300z" fill="#e8e8e8"/></svg>
<div style="left:1289.4px;top:75.7px;width:223.6px;height:267.5px;background:#414143;"></div>
<div style="left:1289.4px;top:75.7px;width:223.6px;height:9.6px;background:#232325;border-top-left-radius:3px;"></div>
<div style="left:1289.4px;top:82.8px;width:223.6px;height:2.5px;background:#141416;"></div>
<div style="left:1506.4px;top:77.6px;width:3.4px;height:3.4px;background:#f4f4f4;border-radius:50%;"></div>
<div style="left:1327.6px;top:86.0px;width:55.0px;height:10.2px;background:#1e1e22;"></div>
<div style="left:1383.4px;top:86.0px;width:55.2px;height:10.2px;background:#1e1e22;"></div>
<div style="left:1500.0px;top:86.0px;width:13.0px;height:8.8px;background:#c9c9c9;"></div>
<span class="t" style="left:1292.4px;top:88.0px;font-size:7.7px;color:#f0f0f0;-webkit-text-stroke:0.1px currentColor;transform:scaleX(0.9285);">Navigator</span>
<span class="t" style="left:1332.4px;top:88.0px;font-size:7.7px;color:#f0f0f0;-webkit-text-stroke:0.1px currentColor;transform:scaleX(0.8798);">Rank Position</span>
<span class="t" style="left:1389.4px;top:88.0px;font-size:7.7px;color:#f0f0f0;-webkit-text-stroke:0.1px currentColor;transform:scaleX(0.8808);">Void Ex</span>
<div style="left:1297.2px;top:117.0px;width:137.5px;height:148.2px;background:#1f2325;"></div>
<div style="left:1304.0px;top:122.2px;width:125.7px;height:137.2px;background:#8e8e90;background-image:linear-gradient(#909092 1.1px,transparent 1.1px),linear-gradient(90deg,#4a4a4c 1px,transparent 1px);background-size:100% 3.2px,2.17px 100%;"></div>
<svg width="1513" height="909" viewBox="0 0 1513 909"><rect x="1304" y="169.900" width="125.700" height="5" fill="#0c50b4"/><rect x="1378" y="119.800" width="5.300" height="139.600" fill="#b4cd14"/><path d="M1304.6 257.1C1305.3 253.2 1307.0 241.6 1308.9 233.7C1310.8 225.7 1313.3 217.2 1315.9 209.3C1318.5 201.5 1321.8 192.4 1324.5 186.7C1327.3 181.1 1329.9 177.8 1332.4 175.4C1334.8 173.1 1336.9 172.5 1339.3 172.8C1341.8 173.2 1344.4 174.5 1347.1 177.7C1349.9 180.9 1352.9 186.7 1355.8 192.0C1358.7 197.2 1361.9 204.1 1364.5 209.3C1367.1 214.6 1369.2 219.2 1371.5 223.2C1373.8 227.3 1375.4 230.4 1378.4 233.7C1381.5 236.9 1387.9 241.2 1389.7 242.7L1389.7 242.7C1386.4 242.2 1374.5 241.8 1369.7 239.8C1365.0 237.7 1363.4 234.4 1361.1 230.2C1358.7 226.0 1357.6 219.8 1355.8 214.6C1354.1 209.3 1352.5 203.5 1350.6 198.9C1348.7 194.3 1346.6 189.4 1344.5 187.1C1342.5 184.8 1340.5 185.0 1338.5 185.0C1336.4 185.0 1334.4 185.4 1332.4 187.1C1330.3 188.8 1328.6 191.1 1326.3 195.4C1324.0 199.7 1320.9 206.4 1318.5 212.8C1316.0 219.2 1313.6 226.3 1311.5 233.7C1309.4 241.1 1306.7 253.2 1305.8 257.1z" fill="#bff5f1" fill-opacity="0.85" stroke="none"/><g fill="none" stroke="#d6f9f5" stroke-width="0.7"><path d="M1304.6 257.1C1305.3 253.2 1307.0 241.6 1308.9 233.7C1310.8 225.7 1313.3 217.2 1315.9 209.3C1318.5 201.5 1321.8 192.4 1324.5 186.7C1327.3 181.1 1329.9 177.8 1332.4 175.4C1334.8 173.1 1336.9 172.5 1339.3 172.8C1341.8 173.2 1344.4 174.5 1347.1 177.7C1349.9 180.9 1352.9 186.7 1355.8 192.0C1358.7 197.2 1361.9 204.1 1364.5 209.3C1367.1 214.6 1369.2 219.2 1371.5 223.2C1373.8 227.3 1375.4 230.4 1378.4 233.7C1381.5 236.9 1387.9 241.2 1389.7 242.7"/><path d="M1304.7 257.1C1305.5 253.2 1307.4 241.6 1309.3 233.7C1311.2 225.8 1313.6 217.5 1316.2 209.8C1318.8 202.2 1322.1 193.4 1324.8 188.0C1327.5 182.5 1330.0 179.3 1332.4 177.1C1334.8 174.9 1336.8 174.3 1339.2 174.6C1341.6 174.9 1344.1 176.0 1346.8 179.0C1349.4 182.1 1352.3 187.8 1355.1 193.0C1357.8 198.1 1360.8 204.9 1363.3 210.1C1365.8 215.3 1367.7 220.2 1370.0 224.2C1372.3 228.3 1373.9 231.5 1377.2 234.5C1380.5 237.6 1387.6 241.4 1389.7 242.7"/><path d="M1304.9 257.1C1305.7 253.2 1307.7 241.5 1309.7 233.7C1311.6 225.9 1314.0 217.7 1316.6 210.3C1319.2 202.9 1322.4 194.5 1325.0 189.2C1327.7 184.0 1330.0 180.9 1332.4 178.8C1334.7 176.6 1336.7 176.0 1339.1 176.3C1341.4 176.6 1343.9 177.4 1346.4 180.4C1348.9 183.3 1351.7 188.9 1354.3 193.9C1357.0 199.0 1359.7 205.6 1362.0 210.8C1364.4 216.0 1366.2 221.1 1368.5 225.2C1370.8 229.3 1372.4 232.5 1376.0 235.4C1379.5 238.3 1387.4 241.5 1389.7 242.7"/><path d="M1305.1 257.1C1305.9 253.2 1308.0 241.4 1310.0 233.7C1312.0 226.0 1314.4 218.0 1317.0 210.8C1319.5 203.6 1322.7 195.5 1325.3 190.5C1327.9 185.4 1330.1 182.5 1332.4 180.4C1334.6 178.4 1336.7 177.8 1339.0 178.1C1341.2 178.3 1343.6 178.9 1346.0 181.7C1348.5 184.5 1351.1 190.0 1353.6 194.9C1356.1 199.9 1358.6 206.4 1360.8 211.6C1363.0 216.8 1364.7 222.1 1367.0 226.2C1369.3 230.3 1370.9 233.5 1374.7 236.3C1378.5 239.0 1387.2 241.6 1389.7 242.7"/><path d="M1305.3 257.1C1306.1 253.2 1308.4 241.3 1310.4 233.7C1312.4 226.0 1314.8 218.3 1317.3 211.3C1319.9 204.3 1323.0 196.6 1325.5 191.7C1328.0 186.8 1330.2 184.1 1332.4 182.1C1334.6 180.1 1336.6 179.6 1338.8 179.8C1341.0 180.0 1343.3 180.4 1345.7 183.1C1348.0 185.8 1350.5 191.1 1352.9 195.9C1355.2 200.8 1357.5 207.1 1359.6 212.3C1361.7 217.5 1363.2 223.1 1365.5 227.2C1367.8 231.4 1369.4 234.6 1373.5 237.2C1377.5 239.7 1387.0 241.8 1389.7 242.7"/><path d="M1305.4 257.1C1306.3 253.2 1308.7 241.2 1310.8 233.7C1312.8 226.1 1315.2 218.6 1317.7 211.8C1320.2 205.0 1323.3 197.6 1325.8 193.0C1328.2 188.3 1330.2 185.7 1332.4 183.8C1334.5 181.9 1336.6 181.4 1338.7 181.5C1340.9 181.6 1343.0 181.8 1345.3 184.4C1347.5 187.0 1349.9 192.1 1352.1 196.9C1354.3 201.7 1356.3 207.9 1358.3 213.1C1360.3 218.3 1361.7 224.1 1364.0 228.2C1366.3 232.4 1367.9 235.6 1372.2 238.0C1376.5 240.4 1386.8 241.9 1389.7 242.7"/><path d="M1305.6 257.1C1306.5 253.2 1309.1 241.1 1311.1 233.7C1313.2 226.2 1315.6 218.9 1318.1 212.3C1320.6 205.7 1323.7 198.7 1326.0 194.2C1328.4 189.7 1330.3 187.2 1332.4 185.4C1334.5 183.6 1336.5 183.2 1338.6 183.3C1340.7 183.3 1342.8 183.3 1344.9 185.8C1347.0 188.2 1349.3 193.2 1351.4 197.9C1353.4 202.6 1355.2 208.6 1357.1 213.8C1358.9 219.0 1360.2 225.0 1362.5 229.2C1364.9 233.4 1366.5 236.6 1371.0 238.9C1375.5 241.1 1386.6 242.1 1389.7 242.7"/><path d="M1305.8 257.1C1306.7 253.2 1309.4 241.1 1311.5 233.7C1313.6 226.3 1316.0 219.2 1318.5 212.8C1320.9 206.4 1324.0 199.7 1326.3 195.4C1328.6 191.1 1330.3 188.8 1332.4 187.1C1334.4 185.4 1336.4 185.0 1338.5 185.0C1340.5 185.0 1342.5 184.8 1344.5 187.1C1346.6 189.4 1348.7 194.3 1350.6 198.9C1352.5 203.5 1354.1 209.3 1355.8 214.6C1357.6 219.8 1358.7 226.0 1361.1 230.2C1363.4 234.4 1365.0 237.7 1369.7 239.8C1374.5 241.8 1386.4 242.2 1389.7 242.7"/><path d="M1390.3 242.7C1390.3 237.3 1390.5 221.4 1390.8 210.2C1391.1 199.0 1391.6 186.7 1392.2 175.7C1392.7 164.7 1392.5 151.9 1394.1 144.2C1395.7 136.4 1398.9 130.9 1401.7 129.4C1404.6 127.8 1408.4 131.3 1411.1 134.9C1413.8 138.6 1416.0 143.3 1417.7 151.1C1419.5 158.9 1420.4 172.4 1421.5 181.5C1422.7 190.7 1423.4 198.2 1424.5 205.9C1425.6 213.5 1427.4 224.0 1428.0 227.6" stroke-width="0.9" stroke="#e0fcf9"/><path d="M1389.5 242.3C1389.7 237.1 1390.4 221.7 1391.0 210.9C1391.6 200.1 1392.4 188.2 1393.3 177.5C1394.1 166.9 1394.3 154.5 1395.9 147.1C1397.6 139.6 1400.4 134.4 1403.0 132.9C1405.6 131.4 1409.1 134.7 1411.6 138.0C1414.0 141.4 1416.2 145.7 1417.8 152.9C1419.5 160.2 1420.4 172.7 1421.5 181.5C1422.7 190.3 1423.4 198.2 1424.5 205.9C1425.6 213.5 1427.4 224.0 1428.0 227.6" stroke-width="0.9" stroke="#e0fcf9"/><path d="M1388.7 241.9C1389.1 236.8 1390.2 222.0 1391.2 211.5C1392.1 201.1 1393.2 189.6 1394.3 179.4C1395.4 169.1 1396.1 157.1 1397.8 150.0C1399.4 142.8 1401.9 137.9 1404.3 136.5C1406.7 135.0 1409.8 138.1 1412.0 141.1C1414.3 144.2 1416.4 148.0 1418.0 154.8C1419.5 161.5 1420.5 173.0 1421.5 181.5C1422.6 190.0 1423.4 198.2 1424.5 205.9C1425.6 213.5 1427.4 224.0 1428.0 227.6" stroke-width="0.9" stroke="#e0fcf9"/><path d="M1387.9 241.4C1388.5 236.6 1390.1 222.2 1391.3 212.2C1392.6 202.2 1394.0 191.1 1395.4 181.2C1396.8 171.3 1398.0 159.7 1399.6 152.8C1401.3 146.0 1403.4 141.4 1405.6 140.0C1407.7 138.5 1410.4 141.4 1412.5 144.2C1414.6 147.0 1416.6 150.4 1418.1 156.6C1419.6 162.8 1420.5 173.3 1421.5 181.5C1422.6 189.7 1423.4 198.2 1424.5 205.9C1425.6 213.5 1427.4 224.0 1428.0 227.6" stroke-width="0.9" stroke="#e0fcf9"/><path d="M1387.2 241.0C1387.9 236.3 1389.9 222.5 1391.5 212.9C1393.1 203.2 1394.9 192.6 1396.5 183.0C1398.2 173.5 1399.8 162.3 1401.5 155.7C1403.2 149.2 1404.9 144.9 1406.8 143.5C1408.7 142.1 1411.1 144.8 1413.0 147.3C1414.9 149.8 1416.8 152.7 1418.2 158.4C1419.6 164.2 1420.5 173.6 1421.5 181.5C1422.6 189.4 1423.4 198.2 1424.5 205.9C1425.6 213.5 1427.4 224.0 1428.0 227.6" stroke-width="0.9" stroke="#e0fcf9"/><path d="M1386.4 240.6C1387.3 236.1 1389.8 222.8 1391.7 213.5C1393.5 204.3 1395.7 194.0 1397.6 184.9C1399.6 175.7 1401.6 164.9 1403.3 158.6C1405.1 152.3 1406.4 148.4 1408.1 147.1C1409.8 145.7 1411.7 148.2 1413.4 150.4C1415.1 152.6 1416.9 155.1 1418.3 160.3C1419.6 165.5 1420.5 173.9 1421.5 181.5C1422.6 189.1 1423.4 198.2 1424.5 205.9C1425.6 213.5 1427.4 224.0 1428.0 227.6" stroke-width="0.9" stroke="#e0fcf9"/><path d="M1385.6 240.2C1386.7 235.8 1389.7 223.1 1391.9 214.2C1394.0 205.3 1396.5 195.5 1398.7 186.7C1400.9 177.9 1403.4 167.6 1405.2 161.5C1407.0 155.5 1407.9 151.9 1409.4 150.6C1410.8 149.2 1412.4 151.6 1413.9 153.5C1415.4 155.4 1417.1 157.4 1418.4 162.1C1419.7 166.8 1420.5 174.2 1421.5 181.5C1422.6 188.8 1423.4 198.2 1424.5 205.9C1425.6 213.5 1427.4 224.0 1428.0 227.6" stroke-width="0.9" stroke="#e0fcf9"/><path d="M1384.8 239.7C1386.0 235.6 1389.5 223.4 1392.0 214.9C1394.5 206.4 1397.3 196.9 1399.8 188.5C1402.3 180.1 1405.2 170.2 1407.1 164.4C1408.9 158.7 1409.4 155.4 1410.6 154.1C1411.9 152.8 1413.0 154.9 1414.4 156.6C1415.7 158.2 1417.3 159.8 1418.5 164.0C1419.7 168.1 1420.5 174.5 1421.5 181.5C1422.5 188.5 1423.4 198.2 1424.5 205.9C1425.6 213.5 1427.4 224.0 1428.0 227.6" stroke-width="0.9" stroke="#e0fcf9"/><path d="M1384.1 239.3C1385.4 235.4 1389.4 223.7 1392.2 215.6C1395.0 207.4 1398.1 198.4 1400.9 190.4C1403.7 182.3 1407.1 172.8 1408.9 167.3C1410.8 161.9 1410.9 158.9 1411.9 157.7C1412.9 156.4 1413.7 158.3 1414.8 159.7C1415.9 161.0 1417.5 162.1 1418.6 165.8C1419.8 169.4 1420.6 174.8 1421.5 181.5C1422.5 188.2 1423.4 198.2 1424.5 205.9C1425.6 213.5 1427.4 224.0 1428.0 227.6" stroke-width="0.9" stroke="#e0fcf9"/><path d="M1383.3 238.9C1384.8 235.1 1389.3 224.0 1392.4 216.2C1395.5 208.5 1398.9 199.9 1402.0 192.2C1405.0 184.5 1408.9 175.4 1410.8 170.2C1412.6 165.1 1412.4 162.4 1413.2 161.2C1414.0 159.9 1414.4 161.7 1415.3 162.8C1416.2 163.8 1417.7 164.5 1418.8 167.6C1419.8 170.8 1420.6 175.2 1421.5 181.5C1422.5 187.9 1423.4 198.2 1424.5 205.9C1425.6 213.5 1427.4 224.0 1428.0 227.6" stroke-width="0.9" stroke="#e0fcf9"/></g><path d="M1414.9 144.2C1415.6 146.0 1417.7 151.3 1418.8 155.5C1419.8 159.7 1420.5 163.6 1421.2 169.4C1421.9 175.2 1422.2 183.3 1422.9 190.2C1423.6 197.2 1424.5 204.9 1425.4 211.1C1426.2 217.3 1427.5 224.8 1428.0 227.6" fill="none" stroke="#d4f8f4" stroke-width="2.200" stroke-linecap="round"/><path d="M1304.7 257.1C1305.6 253.2 1307.8 241.5 1309.8 233.7C1311.8 225.9 1314.3 217.5 1316.7 210.2C1319.2 203.0 1323.2 193.6 1324.5 190.2" fill="none" stroke="#d8faf6" stroke-width="1.500" stroke-linecap="round"/><rect x="1378" y="119.800" width="5.300" height="103" fill="#b4cd14" fill-opacity="0.85"/></svg>
<div style="left:1440.5px;top:121.8px;width:9.8px;height:8.0px;background:#1f2325;"></div>
<span class="t" style="left:1453.3px;top:122.1px;font-size:5.9px;color:#ededed;-webkit-text-stroke:0.1px currentColor;transform:scaleX(1.0145);">Over View</span>
<div style="left:1440.5px;top:137.2px;width:9.8px;height:8.0px;background:#1f2325;"></div>
<span class="t" style="left:1453.3px;top:137.1px;font-size:5.9px;color:#ededed;-webkit-text-stroke:0.1px currentColor;transform:scaleX(0.9567);">Side View</span>
<div style="left:1440.5px;top:153.3px;width:9.8px;height:8.0px;background:#1f2325;"></div>
<span class="t" style="left:1453.3px;top:152.1px;font-size:5.9px;color:#ededed;-webkit-text-stroke:0.1px currentColor;transform:scaleX(1.0602);">Bottom View</span>
<div style="left:1440.5px;top:169.0px;width:9.8px;height:8.0px;background:#1f2325;"></div>
<span class="t" style="left:1453.3px;top:168.1px;font-size:5.9px;color:#ededed;-webkit-text-stroke:0.1px currentColor;transform:scaleX(0.9902);">Top View</span>
<div style="left:1440.5px;top:185.1px;width:9.8px;height:8.0px;background:#1f2325;"></div>
<span class="t" style="left:1453.3px;top:183.6px;font-size:5.9px;color:#ededed;-webkit-text-stroke:0.1px currentColor;transform:scaleX(1.0100);">Perspective View</span>
<div style="left:1440.5px;top:200.8px;width:9.8px;height:8.0px;background:#1f2325;"></div>
<span class="t" style="left:1453.3px;top:199.6px;font-size:5.9px;color:#ededed;-webkit-text-stroke:0.1px currentColor;transform:scaleX(0.9973);">Grid View</span>
<div style="left:1440.5px;top:216.5px;width:9.8px;height:8.0px;background:#1f2325;"></div>
<span class="t" style="left:1453.3px;top:215.6px;font-size:5.9px;color:#ededed;-webkit-text-stroke:0.1px currentColor;transform:scaleX(0.9965);">Transparency View</span>
<div style="left:1440.5px;top:239.5px;width:9.8px;height:11.0px;background:#47474a;"></div>
<div style="left:1303.8px;top:274.5px;width:11.2px;height:9.6px;background:#1f2325;"></div>
<div style="left:1323.7px;top:273.1px;width:148.0px;height:12.5px;background:#1f2325;"></div>
<div style="left:1476.0px;top:274.9px;width:19.5px;height:9.6px;background:#dedcdc;"></div>
<span class="t" style="left:1482.1px;top:276.8px;font-size:6.6px;color:#555;-webkit-text-stroke:0.1px currentColor;">76</span>
<div style="left:1303.8px;top:295.6px;width:11.2px;height:9.6px;background:#1f2325;"></div>
<div style="left:1323.7px;top:294.2px;width:148.0px;height:12.5px;background:#1f2325;"></div>
<div style="left:1476.0px;top:296.0px;width:19.5px;height:9.6px;background:#dedcdc;"></div>
<span class="t" style="left:1482.1px;top:297.9px;font-size:6.6px;color:#555;-webkit-text-stroke:0.1px currentColor;">53</span>
<div style="left:1303.8px;top:317.0px;width:11.2px;height:9.6px;background:#1f2325;"></div>
<div style="left:1323.7px;top:315.6px;width:148.0px;height:12.5px;background:#1f2325;"></div>
<div style="left:1476.0px;top:317.4px;width:19.5px;height:9.6px;background:#dedcdc;"></div>
<span class="t" style="left:1482.1px;top:319.3px;font-size:6.6px;color:#555;-webkit-text-stroke:0.1px currentColor;">51</span>
<svg width="1513" height="909" viewBox="0 0 1513 909"><g fill="#9a9a9a"><path d="M1367.6 284.6h4.800l-2.400-4.200z"/><path d="M1423.2 305.7h4.800l-2.400-4.200z"/><path d="M1405.4 327h4.800l-2.400-4.200z"/></g></svg>
<div style="left:1309.8px;top:344.0px;width:203.2px;height:148.5px;background:#414143;"></div>
<div style="left:1309.8px;top:344.0px;width:203.2px;height:15.2px;background:#232124;"></div>
<div style="left:1309.8px;top:356.2px;width:203.2px;height:3.0px;background:#151517;"></div>
<div style="left:1505.2px;top:348.8px;width:4.4px;height:4.4px;background:#f4f4f4;border-radius:50%;"></div>
<span class="t" style="left:1323.0px;top:367.2px;font-size:12.3px;color:#ececec;transform:scaleX(0.9501);">Section Mark</span>
<div style="left:1332.0px;top:390.0px;width:22.0px;height:18.0px;background:#1d2226;background:linear-gradient(to top right,#1a1f23 28%,#2c3236 50%,#1a1f23 74%);"></div>
<div style="left:1361.6px;top:396.4px;width:87.0px;height:5.2px;background:#3d4246;border-radius:2.600px;"></div>
<div style="left:1361.6px;top:396.6px;width:45.0px;height:4.8px;background:#f1f1f1;border-radius:1.500px;"></div>
<div style="left:1456.4px;top:390.0px;width:35.8px;height:18.0px;background:#e3e0e1;"></div>
<span class="t" style="left:1466.5px;top:392.1px;font-size:14.2px;color:#2b2b2b;transform:scaleX(0.9813);">42</span>
<div style="left:1332.0px;top:423.9px;width:22.0px;height:18.0px;background:#1d2226;background:linear-gradient(to top right,#1a1f23 28%,#2c3236 50%,#1a1f23 74%);"></div>
<div style="left:1361.6px;top:430.3px;width:87.0px;height:5.2px;background:#3d4246;border-radius:2.600px;"></div>
<div style="left:1361.6px;top:430.5px;width:62.0px;height:4.8px;background:#f1f1f1;border-radius:1.500px;"></div>
<div style="left:1456.4px;top:423.9px;width:35.8px;height:18.0px;background:#e3e0e1;"></div>
<span class="t" style="left:1466.5px;top:426.0px;font-size:14.2px;color:#2b2b2b;transform:scaleX(0.9813);">83</span>
<div style="left:1332.0px;top:457.6px;width:22.0px;height:18.0px;background:#1d2226;background:linear-gradient(90deg,#2a2f33 0,#262b2f 45%,#1b2024 55%,#1b2024 100%);"></div>
<div style="left:1361.6px;top:464.0px;width:87.0px;height:5.2px;background:#3d4246;border-radius:2.600px;"></div>
<div style="left:1361.6px;top:464.2px;width:34.4px;height:4.8px;background:#f1f1f1;border-radius:1.500px;"></div>
<div style="left:1456.4px;top:457.6px;width:35.8px;height:18.0px;background:#e3e0e1;"></div>
<span class="t" style="left:1466.5px;top:459.7px;font-size:14.2px;color:#2b2b2b;transform:scaleX(0.9813);">34</span>
<div style="left:1309.8px;top:494.6px;width:203.2px;height:144.5px;background:#414143;"></div>
<div style="left:1309.8px;top:494.6px;width:203.2px;height:15.0px;background:#232124;"></div>
<div style="left:1309.8px;top:507.0px;width:203.2px;height:2.6px;background:#151517;"></div>
<div style="left:1506.6px;top:499.2px;width:4.4px;height:4.4px;background:#f4f4f4;border-radius:50%;"></div>
<span class="t" style="left:1321.7px;top:515.2px;font-size:12.3px;color:#ececec;transform:scaleX(0.9624);">Assign Point</span>
<div style="left:1321.4px;top:542.3px;width:36.8px;height:15.6px;background:#b2afb0;"></div>
<div style="left:1457.7px;top:542.3px;width:36.9px;height:15.6px;background:#b2afb0;"></div>
<span class="t" style="left:1332.2px;top:543.6px;font-size:13.2px;color:#2b2b2b;transform:scaleX(0.9875);">38</span>
<span class="t" style="left:1472.7px;top:543.6px;font-size:13.2px;color:#2b2b2b;transform:scaleX(0.9535);">2</span>
<div style="left:1361.6px;top:548.5px;width:88.0px;height:3.2px;background:#3d4144;"></div>
<div style="left:1361.6px;top:548.6px;width:39.9px;height:3.0px;background:#f1f1f1;"></div>
<div style="left:1400.6px;top:547.1px;width:1.2px;height:6.0px;background:#f1f1f1;"></div>
<div style="left:1321.4px;top:566.2px;width:36.8px;height:15.6px;background:#b2afb0;"></div>
<div style="left:1457.7px;top:566.2px;width:36.9px;height:15.6px;background:#b2afb0;"></div>
<span class="t" style="left:1332.2px;top:567.5px;font-size:13.2px;color:#2b2b2b;transform:scaleX(0.9875);">69</span>
<span class="t" style="left:1469.0px;top:567.5px;font-size:13.2px;color:#2b2b2b;transform:scaleX(0.9875);">54</span>
<div style="left:1361.6px;top:572.4px;width:88.0px;height:3.2px;background:#3d4144;"></div>
<div style="left:1361.6px;top:572.5px;width:44.4px;height:3.0px;background:#f1f1f1;"></div>
<div style="left:1405.1px;top:571.0px;width:1.2px;height:6.0px;background:#f1f1f1;"></div>
<div style="left:1321.4px;top:590.4px;width:36.8px;height:15.6px;background:#b2afb0;"></div>
<div style="left:1457.7px;top:590.4px;width:36.9px;height:15.6px;background:#b2afb0;"></div>
<span class="t" style="left:1332.2px;top:591.7px;font-size:13.2px;color:#2b2b2b;transform:scaleX(0.9875);">21</span>
<span class="t" style="left:1469.0px;top:591.7px;font-size:13.2px;color:#2b2b2b;transform:scaleX(0.9875);">41</span>
<div style="left:1361.6px;top:596.6px;width:88.0px;height:3.2px;background:#3d4144;"></div>
<div style="left:1361.6px;top:596.7px;width:84.4px;height:3.0px;background:#f1f1f1;"></div>
<div style="left:1445.1px;top:595.2px;width:1.2px;height:6.0px;background:#f1f1f1;"></div>
<div style="left:1321.4px;top:614.3px;width:36.8px;height:15.6px;background:#b2afb0;"></div>
<div style="left:1457.7px;top:614.3px;width:36.9px;height:15.6px;background:#b2afb0;"></div>
<span class="t" style="left:1332.2px;top:615.6px;font-size:13.2px;color:#2b2b2b;transform:scaleX(0.9875);">40</span>
<span class="t" style="left:1469.0px;top:615.6px;font-size:13.2px;color:#2b2b2b;transform:scaleX(0.9875);">81</span>
<div style="left:1361.6px;top:620.5px;width:88.0px;height:3.2px;background:#3d4144;"></div>
<div style="left:1361.6px;top:620.6px;width:28.4px;height:3.0px;background:#f1f1f1;"></div>
<div style="left:1389.1px;top:619.1px;width:1.2px;height:6.0px;background:#f1f1f1;"></div>
<div style="left:1314.3px;top:659.2px;width:185.7px;height:175.1px;background:#414143;border-radius:6px;"></div>
<div style="left:1314.3px;top:659.2px;width:185.7px;height:17.0px;background:#242123;border-radius:6px 6px 0 0;"></div>
<div style="left:1314.3px;top:672.8px;width:185.7px;height:3.4px;background:#161617;"></div>
<span class="t" style="left:1317.5px;top:678.5px;font-size:12.2px;color:#ececec;transform:scaleX(0.9459);">Option</span>
<div style="left:1344.7px;top:699.0px;width:111.0px;height:108.0px;background:#3b4144;"></div>
<div style="left:1350.6px;top:705.0px;width:103.0px;height:96.8px;background:#1e2327;"></div>
<svg width="1513" height="909" viewBox="0 0 1513 909"><g fill="none" stroke="#d8d8d8" stroke-width="0.9"><path d="M1376 702V774.400M1381 778.400H1455.600"/><path d="M1349 804L1426.600 728" stroke-dasharray="8.500 7.500"/><rect x="1371.400" y="774" width="9.600" height="9.600" stroke-width="1.100" fill="#1e2327"/></g></svg>
<span class="t" style="left:1358.0px;top:711.3px;font-size:11.2px;color:#ececec;transform:scaleX(0.9376);">381.2455</span>
<span class="t" style="left:1409.8px;top:783.1px;font-size:11.2px;color:#ececec;transform:scaleX(0.9633);">88.462</span>
<div style="left:60.5px;top:714.3px;width:207.3px;height:119.5px;background:#414143;border-radius:3px 3px 0 0;"></div>
<div style="left:60.5px;top:714.3px;width:207.3px;height:10.5px;background:#242123;border-radius:3px 3px 0 0;"></div>
<div style="left:60.5px;top:721.6px;width:207.3px;height:3.2px;background:#151517;"></div>
<div style="left:262.3px;top:715.8px;width:2.8px;height:2.8px;background:#f4f4f4;border-radius:50%;"></div>
<div style="left:96.5px;top:725.3px;width:49.0px;height:11.0px;background:#1e1e22;"></div>
<div style="left:146.5px;top:725.3px;width:51.2px;height:11.0px;background:#1e1e22;"></div>
<div style="left:252.2px;top:725.7px;width:10.6px;height:8.8px;background:#c9c9c9;"></div>
<span class="t" style="left:69.6px;top:726.8px;font-size:7.2px;color:#f0f0f0;-webkit-text-stroke:0.1px currentColor;transform:scaleX(0.8950);">Color</span>
<span class="t" style="left:114.3px;top:726.8px;font-size:7.2px;color:#f0f0f0;-webkit-text-stroke:0.1px currentColor;transform:scaleX(0.8839);">Tone</span>
<span class="t" style="left:159.6px;top:726.8px;font-size:7.2px;color:#f0f0f0;-webkit-text-stroke:0.1px currentColor;transform:scaleX(0.8693);">Symbols</span>
<div style="left:86.2px;top:771.3px;width:23.7px;height:26.4px;background:#e8490f;border:1.500px solid #7a7a7c;"></div>
<div style="left:70.0px;top:750.6px;width:24.3px;height:25.3px;background:#fdebe0;border:2.500px solid #8a8a8c;"></div>
<div style="left:77.0px;top:760.2px;width:23.7px;height:26.0px;background:#0a7fbd;border:2.500px solid #77777a;background:linear-gradient(90deg,#030b14 0%,#0b5f95 60%,#1190cf 100%);"></div>
<div style="left:109.7px;top:751.0px;width:118.6px;height:12.0px;background:#1f2325;"></div>
<div style="left:232.9px;top:753.3px;width:17.1px;height:8.7px;background:#dedcdc;"></div>
<span class="t" style="left:238.1px;top:755.1px;font-size:6.2px;color:#666;-webkit-text-stroke:0.1px currentColor;">43</span>
<div style="left:109.7px;top:768.3px;width:118.6px;height:12.0px;background:#1f2325;"></div>
<div style="left:232.9px;top:770.6px;width:17.1px;height:8.7px;background:#dedcdc;"></div>
<span class="t" style="left:238.1px;top:772.4px;font-size:6.2px;color:#666;-webkit-text-stroke:0.1px currentColor;">68</span>
<div style="left:109.7px;top:785.5px;width:118.6px;height:12.0px;background:#1f2325;"></div>
<div style="left:232.9px;top:787.8px;width:17.1px;height:8.7px;background:#dedcdc;"></div>
<span class="t" style="left:238.1px;top:789.6px;font-size:6.2px;color:#666;-webkit-text-stroke:0.1px currentColor;">47</span>
<div style="left:109.7px;top:802.8px;width:118.6px;height:12.0px;background:#1f2325;"></div>
<div style="left:232.9px;top:805.1px;width:17.1px;height:8.7px;background:#dedcdc;"></div>
<span class="t" style="left:238.1px;top:806.9px;font-size:6.2px;color:#666;-webkit-text-stroke:0.1px currentColor;">71</span>
<svg width="1513" height="909" viewBox="0 0 1513 909"><g fill="#8c8c8c"><path d="M160.6 762.4h3.800l-1.900-3.800z"/><path d="M178.1 779.7h3.800l-1.900-3.800z"/><path d="M159.1 796.9h3.800l-1.900-3.800z"/><path d="M185.5 814.2h3.800l-1.900-3.800z"/></g></svg>
</div></body></html>
